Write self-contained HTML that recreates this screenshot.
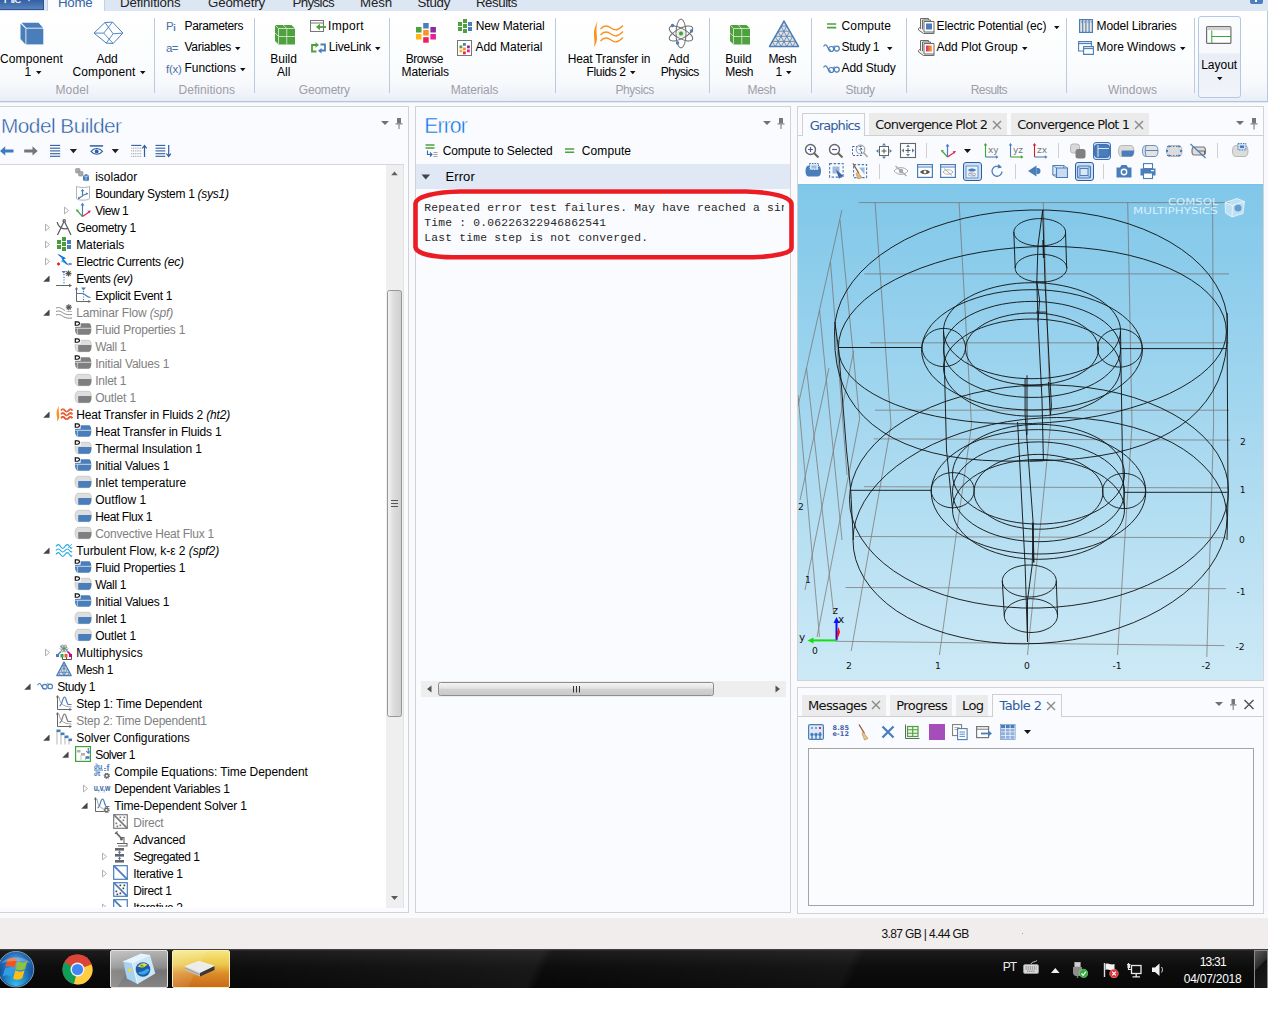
<!DOCTYPE html><html><head><meta charset="utf-8"><title>COMSOL Multiphysics</title><style>
html,body{margin:0;padding:0}
body{width:1280px;height:1024px;background:#fff;position:relative;overflow:hidden;font-family:"Liberation Sans",sans-serif;font-size:12px}
#app{position:absolute;left:0;top:0;width:1268px;height:988px;background:#f9fafd;overflow:hidden}
#app div,#app svg,#app span.t{position:absolute}
span.t{white-space:pre;display:block}
.pn{border:1px solid #d2d2d2;background:#fafbfe;box-sizing:border-box}
</style></head><body><div id="app">
<!-- sec_ribbon -->
<div style="left:0px;top:0px;width:1268px;height:11px;background:#dde7f4;"></div><div style="left:0px;top:0px;width:44px;height:10px;background:linear-gradient(#3360a5,#5a82bb);border-right:1px solid #2a5496;border-bottom:1px solid #2a5496;box-sizing:border-box;"></div><div style="left:47px;top:0px;width:58px;height:11px;background:#fcfdff;border-left:1px solid #c3d1e4;border-right:1px solid #c3d1e4;box-sizing:border-box;"></div><span class="t" style="top:-11.21px;font-size:13.3px;line-height:19px;color:#fff;letter-spacing:-1.108px;left:3.50px;">File</span><span class="t" style="top:-7.21px;font-size:13.3px;line-height:19px;color:#3563a8;letter-spacing:-0.244px;left:58.00px;">Home</span><span class="t" style="top:-7.21px;font-size:13.3px;line-height:19px;color:#222;letter-spacing:-0.136px;left:120.00px;">Definitions</span><span class="t" style="top:-7.21px;font-size:13.3px;line-height:19px;color:#222;letter-spacing:-0.174px;left:208.00px;">Geometry</span><span class="t" style="top:-7.21px;font-size:13.3px;line-height:19px;color:#222;letter-spacing:-0.618px;left:292.50px;">Physics</span><span class="t" style="top:-7.21px;font-size:13.3px;line-height:19px;color:#222;letter-spacing:-0.131px;left:360.00px;">Mesh</span><span class="t" style="top:-7.21px;font-size:13.3px;line-height:19px;color:#222;letter-spacing:-0.302px;left:417.50px;">Study</span><span class="t" style="top:-7.21px;font-size:13.3px;line-height:19px;color:#222;letter-spacing:-0.478px;left:476.00px;">Results</span><svg style="left:26.5px;top:-2px;" width="8" height="6" viewBox="0 0 8 6"><path d="M0 0h4l-2 3.500z" fill="#fff"/></svg><div style="left:1250px;top:0px;width:13px;height:3.8px;background:#4a80be;border-radius:0 0 2px 2px;"></div><div style="left:1255.2px;top:0px;width:1.8px;height:2px;background:#fff;"></div><div style="left:0px;top:11px;width:1267px;height:90px;background:linear-gradient(#ffffff 0%,#fcfdfe 50%,#f7f9fc 80%,#f0f3f9 92%,#e8edf6 100%);border-right:1px solid #b9c9dc;border-bottom:1px solid #b4c5da;box-sizing:content-box;"></div><div style="left:0px;top:102px;width:1268px;height:1px;background:#e4eaf3;"></div><div style="left:154.0px;top:18px;width:1px;height:75px;background:#bccadf;"></div><div style="left:254.0px;top:18px;width:1px;height:75px;background:#bccadf;"></div><div style="left:389.0px;top:18px;width:1px;height:75px;background:#bccadf;"></div><div style="left:555.0px;top:18px;width:1px;height:75px;background:#bccadf;"></div><div style="left:709.0px;top:18px;width:1px;height:75px;background:#bccadf;"></div><div style="left:811.0px;top:18px;width:1px;height:75px;background:#bccadf;"></div><div style="left:906.0px;top:18px;width:1px;height:75px;background:#bccadf;"></div><div style="left:1066.0px;top:18px;width:1px;height:75px;background:#bccadf;"></div><div style="left:1194.0px;top:18px;width:1px;height:75px;background:#bccadf;"></div><svg style="left:20px;top:22px;" width="24" height="23" viewBox="0 0 24 23"><path d="M.5 1.500L5.500 6.500V22.500L.5 17z" fill="#4a7ebb"/><path d="M1.500 .800h17l4.500 5H6.200z" fill="#4a7ebb"/><rect x="6.300" y="6.600" width="17" height="15.800" fill="#4a7ebb"/></svg><span class="t" style="top:50.94px;font-size:12px;line-height:17px;color:#000;letter-spacing:0.107px;left:0.00px;">Component</span><span class="t" style="top:64.04px;font-size:12px;line-height:17px;color:#000;left:24.50px;">1</span><svg style="left:35.5px;top:71px;" width="6" height="4" viewBox="0 0 6 4"><path d="M0 0h5.500l-2.750 3.300z" fill="#111"/></svg><svg style="left:93px;top:21px;" width="31" height="24" viewBox="0 0 31 24"><g stroke="#4a7ebb" stroke-width="1" fill="none" stroke-linejoin="round"><path d="M1 12.100L12 1.500 19.500 1.100 29.900 12.100 20.100 22.500 13.250 22.100z"/><path d="M1 12.100H10.750L19.500 1.100M10.750 12.100L20.100 22.500M29.900 12.100L20.100 12.750 12 1.500M20.100 12.750L13.250 22.100" stroke-width=".9"/></g></svg><span class="t" style="top:50.94px;font-size:12px;line-height:17px;color:#000;letter-spacing:-0.117px;left:96.50px;">Add</span><span class="t" style="top:64.04px;font-size:12px;line-height:17px;color:#000;letter-spacing:0.107px;left:72.50px;">Component</span><svg style="left:140px;top:71px;" width="6" height="4" viewBox="0 0 6 4"><path d="M0 0h5.500l-2.750 3.300z" fill="#111"/></svg><span class="t" style="top:81.84px;font-size:12px;line-height:17px;color:#9d9da8;letter-spacing:0.123px;left:55.50px;">Model</span><span class="t" style="top:18.02px;font-size:11.5px;line-height:16px;color:#4a6fa5;left:166.00px;">P</span><span class="t" style="top:21.68px;font-size:9px;line-height:13px;color:#4a6fa5;font-weight:bold;left:173.20px;">i</span><span class="t" style="top:17.84px;font-size:12px;line-height:17px;color:#000;letter-spacing:-0.332px;left:184.50px;">Parameters</span><span class="t" style="top:39.72px;font-size:11.5px;line-height:16px;color:#4a6fa5;letter-spacing:-0.556px;left:166.00px;">a=</span><span class="t" style="top:39.04px;font-size:12px;line-height:17px;color:#000;letter-spacing:-0.293px;left:184.50px;">Variables</span><svg style="left:235px;top:46.5px;" width="6" height="4" viewBox="0 0 6 4"><path d="M0 0h5.500l-2.750 3.300z" fill="#111"/></svg><span class="t" style="top:61.12px;font-size:11.5px;line-height:16px;color:#4a6fa5;letter-spacing:-0.276px;left:166.00px;">f(x)</span><span class="t" style="top:60.44px;font-size:12px;line-height:17px;color:#000;letter-spacing:-0.058px;left:184.50px;">Functions</span><svg style="left:240px;top:68px;" width="6" height="4" viewBox="0 0 6 4"><path d="M0 0h5.500l-2.750 3.300z" fill="#111"/></svg><span class="t" style="top:81.84px;font-size:12px;line-height:17px;color:#9d9da8;letter-spacing:0.043px;left:178.50px;">Definitions</span><svg style="left:274.5px;top:24.5px;" width="21" height="20" viewBox="0 0 21 20"><path d="M0 0H16.500L20 3.500V19.500H3.500L0 16z" fill="#4fa03f"/><path d="M3.500 3.500H20M3.500 3.500V19.500M3.500 3.500L0 0M3.500 11.500H20M11.750 3.500V19.500M11.750 3.500L8.250 0M0 8l3.500 3.500" stroke="#d3ebcc" stroke-width=".9" fill="none" opacity=".95"/></svg><span class="t" style="top:50.94px;font-size:12px;line-height:17px;color:#000;letter-spacing:-0.017px;left:270.30px;">Build</span><span class="t" style="top:64.04px;font-size:12px;line-height:17px;color:#000;letter-spacing:0.088px;left:277.00px;">All</span><svg style="left:310px;top:20px;" width="17" height="12" viewBox="0 0 17 12"><rect x=".5" y=".5" width="13" height="11" fill="#fff" stroke="#777"/><path d="M.5 3h13" stroke="#777"/><path d="M16 7H8.500" stroke="#4fa03f" stroke-width="1.800"/><path d="M6 7l4-3.200v6.400z" fill="#4fa03f"/></svg><span class="t" style="top:17.84px;font-size:12px;line-height:17px;color:#000;letter-spacing:0.332px;left:328.00px;">Import</span><svg style="left:310px;top:42px;" width="17" height="12" viewBox="0 0 17 12"><path d="M6 3H2v6.500h4.500" stroke="#4fa03f" stroke-width="1.800" fill="none"/><path d="M5.500 .2l3.500 2.800-3.500 2.800z" fill="#4fa03f"/><path d="M10.500 8.500H15V2.500h-4.500" stroke="#4a7ebb" stroke-width="1.800" fill="none"/><path d="M11.500 11.500L8 8.700l3.500-2.800z" fill="#4a7ebb"/></svg><span class="t" style="top:39.04px;font-size:12px;line-height:17px;color:#000;letter-spacing:-0.228px;left:328.80px;">LiveLink</span><svg style="left:375px;top:46.5px;" width="6" height="4" viewBox="0 0 6 4"><path d="M0 0h5.500l-2.750 3.300z" fill="#111"/></svg><span class="t" style="top:81.84px;font-size:12px;line-height:17px;color:#9d9da8;letter-spacing:-0.210px;left:298.80px;">Geometry</span><svg style="left:416px;top:23px;" width="21" height="21" viewBox="0 0 21 21"><rect x="7.2" y="0" width="5.5" height="5.5" fill="#4a7ebb"/><rect x="0" y="4" width="5.5" height="5.5" fill="#4fa03f"/><rect x="14.4" y="4" width="5.5" height="5.5" fill="#8b2a9b"/><rect x="7.2" y="7" width="5.5" height="5.5" fill="#f7931e"/><rect x="0" y="11" width="5.5" height="5.5" fill="#fdb813"/><rect x="14.4" y="11" width="5.5" height="5.5" fill="#e91e9c"/><rect x="7.2" y="14.2" width="5.5" height="5.5" fill="#ec1f5b"/></svg><span class="t" style="top:50.94px;font-size:12px;line-height:17px;color:#000;letter-spacing:-0.436px;left:405.70px;">Browse</span><span class="t" style="top:64.04px;font-size:12px;line-height:17px;color:#000;letter-spacing:-0.164px;left:401.60px;">Materials</span><svg style="left:458px;top:19px;" width="14" height="14" viewBox="0 0 14 14"><rect x="0" y="3" width="4" height="4" fill="#4fa03f"/><rect x="0" y="8" width="4" height="4" fill="#4fa03f"/><rect x="5" y="0" width="4" height="4" fill="#4fa03f"/><rect x="5" y="5" width="4" height="4" fill="#4fa03f"/><rect x="5" y="10" width="4" height="4" fill="#4fa03f"/><rect x="10" y="3" width="4" height="4" fill="#4a7ebb"/><rect x="10" y="8" width="4" height="4" fill="#4a7ebb"/></svg><span class="t" style="top:17.84px;font-size:12px;line-height:17px;color:#000;letter-spacing:-0.085px;left:475.70px;">New Material</span><svg style="left:457px;top:40px;" width="15" height="16" viewBox="0 0 15 16"><rect x=".5" y=".5" width="14" height="15" fill="#fff" stroke="#777"/><rect x="6" y="3" width="2.800" height="2.800" fill="#4a7ebb"/><rect x="2.5" y="5.5" width="2.800" height="2.800" fill="#4fa03f"/><rect x="10" y="5.5" width="2.800" height="2.800" fill="#8b2a9b"/><rect x="6" y="7.5" width="2.800" height="2.800" fill="#f7931e"/><rect x="2.5" y="9.5" width="2.800" height="2.800" fill="#fdb813"/><rect x="10" y="9.5" width="2.800" height="2.800" fill="#e91e9c"/><rect x="6" y="11.5" width="2.800" height="2.800" fill="#ec1f5b"/></svg><span class="t" style="top:39.04px;font-size:12px;line-height:17px;color:#000;letter-spacing:-0.030px;left:475.50px;">Add Material</span><span class="t" style="top:81.84px;font-size:12px;line-height:17px;color:#9d9da8;letter-spacing:-0.153px;left:450.70px;">Materials</span><svg style="left:593px;top:21px;" width="32" height="27" viewBox="0 0 32 27"><path d="M4.500 0C2.500 5 .5 9 1 14.500c.3 4 1 7.500-.2 11.500 2.800-3 3.600-7.500 3-11.500C3.300 10 3.300 5 4.500 0z" fill="#f7931e"/><g stroke="#f7931e" stroke-width="1.300" fill="none"><path d="M7.500 8c3.500-4 6.500-4 10.500-1s7 2.500 12-2.500"/><path d="M7.500 14c3.500-4 6.500-4 10.500-1s7 2.500 12-2.500"/><path d="M7.500 20c3.500-4 6.500-4 10.500-1s7 2.500 12-2.500"/></g></svg><span class="t" style="top:50.94px;font-size:12px;line-height:17px;color:#000;letter-spacing:-0.179px;left:567.80px;">Heat Transfer in</span><span class="t" style="top:64.04px;font-size:12px;line-height:17px;color:#000;letter-spacing:-0.377px;left:586.60px;">Fluids 2</span><svg style="left:630px;top:71px;" width="6" height="4" viewBox="0 0 6 4"><path d="M0 0h5.500l-2.750 3.300z" fill="#111"/></svg><svg style="left:667px;top:18px;" width="28" height="31" viewBox="0 0 28 31"><g stroke="#6a6a6a" stroke-width="1" fill="none"><ellipse cx="14" cy="15.500" rx="13" ry="5" transform="rotate(28 14 15.500)"/><ellipse cx="14" cy="15.500" rx="13" ry="5" transform="rotate(-28 14 15.500)"/><ellipse cx="14" cy="15.500" rx="5" ry="14.500"/></g><circle cx="14" cy="15.500" r="3.600" fill="#e4e4e4"/><circle cx="14" cy="15.500" r="2" fill="#3aa635"/><circle cx="5.500" cy="7.500" r="1.700" fill="#4a7ebb"/><circle cx="24.500" cy="13" r="1.700" fill="#4a7ebb"/><circle cx="10.500" cy="25" r="1.700" fill="#4a7ebb"/></svg><span class="t" style="top:50.94px;font-size:12px;line-height:17px;color:#000;letter-spacing:-0.117px;left:668.20px;">Add</span><span class="t" style="top:64.04px;font-size:12px;line-height:17px;color:#000;letter-spacing:-0.478px;left:660.70px;">Physics</span><span class="t" style="top:81.84px;font-size:12px;line-height:17px;color:#9d9da8;letter-spacing:-0.435px;left:615.50px;">Physics</span><svg style="left:729.5px;top:24.5px;" width="21" height="20" viewBox="0 0 21 20"><path d="M0 0H16.500L20 3.500V19.500H3.500L0 16z" fill="#4fa03f"/><path d="M3.500 3.500H20M3.500 3.500V19.500M3.500 3.500L0 0M3.500 11.500H20M11.750 3.500V19.500M11.750 3.500L8.250 0M0 8l3.500 3.500" stroke="#d3ebcc" stroke-width=".9" fill="none" opacity=".95"/></svg><span class="t" style="top:50.94px;font-size:12px;line-height:17px;color:#000;letter-spacing:-0.077px;left:725.30px;">Build</span><span class="t" style="top:64.04px;font-size:12px;line-height:17px;color:#000;letter-spacing:-0.386px;left:725.30px;">Mesh</span><svg style="left:768px;top:20px;" width="32" height="27.5" viewBox="0 0 30 27"><path d="M15 1L.800 26h28.400z" fill="#e6e1da" stroke="#4a7ebb" stroke-width="1.500" stroke-linejoin="round"/><g stroke="#4a7ebb" stroke-width=".8" fill="none"><path d="M12.2 6.0h5.7"/><path d="M9.3 11.0h11.4"/><path d="M6.5 16.0h17.0"/><path d="M3.6 21.0h22.7"/><path d="M6.5 26L17.8 6.0"/><path d="M6.5 26L3.2 21.0"/><path d="M12.2 26L20.7 11.0"/><path d="M12.2 26L6.1 16.0"/><path d="M17.8 26L23.5 16.0"/><path d="M17.8 26L8.9 11.0"/><path d="M23.5 26L26.4 21.0"/><path d="M23.5 26L11.8 6.0"/></g></svg><span class="t" style="top:50.94px;font-size:12px;line-height:17px;color:#000;letter-spacing:-0.386px;left:768.50px;">Mesh</span><span class="t" style="top:64.04px;font-size:12px;line-height:17px;color:#000;left:775.50px;">1</span><svg style="left:786px;top:71px;" width="6" height="4" viewBox="0 0 6 4"><path d="M0 0h5.500l-2.750 3.300z" fill="#111"/></svg><span class="t" style="top:81.84px;font-size:12px;line-height:17px;color:#9d9da8;letter-spacing:-0.336px;left:747.50px;">Mesh</span><svg style="left:827px;top:23px;" width="10" height="6" viewBox="0 0 10 6"><path d="M0 1h9.200M0 4.700h9.200" stroke="#4fa03f" stroke-width="1.700"/></svg><span class="t" style="top:17.84px;font-size:12px;line-height:17px;color:#000;letter-spacing:0.101px;left:841.60px;">Compute</span><svg style="left:822.5px;top:43.5px;" width="17" height="9" viewBox="0 0 17 9"><g stroke="#4a7ebb" stroke-width="1.200" fill="none"><path d="M.5 2.500c1.500-2.500 3-2 4 .500s2 3.500 3.500 3"/><circle cx="8.200" cy="5" r="2.500"/><circle cx="13.800" cy="4.600" r="2.500"/><path d="M10 3c.8-1.600 1.600-1.600 2.400 0" stroke-width=".9"/></g></svg><span class="t" style="top:39.04px;font-size:12px;line-height:17px;color:#000;letter-spacing:-0.471px;left:841.60px;">Study 1</span><svg style="left:887px;top:46.5px;" width="6" height="4" viewBox="0 0 6 4"><path d="M0 0h5.500l-2.750 3.300z" fill="#111"/></svg><svg style="left:822.5px;top:65px;" width="17" height="9" viewBox="0 0 17 9"><g stroke="#4a7ebb" stroke-width="1.200" fill="none"><path d="M.5 2.500c1.500-2.500 3-2 4 .500s2 3.500 3.500 3"/><circle cx="8.200" cy="5" r="2.500"/><circle cx="13.800" cy="4.600" r="2.500"/><path d="M10 3c.8-1.600 1.600-1.600 2.400 0" stroke-width=".9"/></g></svg><span class="t" style="top:60.44px;font-size:12px;line-height:17px;color:#000;letter-spacing:-0.152px;left:841.60px;">Add Study</span><span class="t" style="top:81.84px;font-size:12px;line-height:17px;color:#9d9da8;letter-spacing:-0.277px;left:845.50px;">Study</span><svg style="left:918px;top:17.5px;" width="17" height="16" viewBox="0 0 17 16"><g fill="#f2f2f2" stroke="#6a6a6a" stroke-width="1"><path d="M2.500 .5h8v11h-8z"/><path d="M4.500 2h8v11h-8z"/><path d="M.5 10.500l2-1.500M.5 10.500v1.500l5 3.500h10.500v-2"/><path d="M6 3.500h10v10.500H6z" fill="#fff"/></g><rect x="8" y="5.500" width="6" height="6" fill="#4a7ebb"/></svg><span class="t" style="top:17.84px;font-size:12px;line-height:17px;color:#000;letter-spacing:-0.160px;left:936.60px;">Electric Potential (ec)</span><svg style="left:1054px;top:25.5px;" width="6" height="4" viewBox="0 0 6 4"><path d="M0 0h5.500l-2.750 3.300z" fill="#111"/></svg><svg style="left:918px;top:39.5px;" width="17" height="16" viewBox="0 0 17 16"><g fill="#f2f2f2" stroke="#6a6a6a" stroke-width="1"><path d="M2.500 .5h8v11h-8z"/><path d="M4.500 2h8v11h-8z"/><path d="M.5 10.500l2-1.500M.5 10.500v1.500l5 3.500h10.500v-2"/><path d="M6 3.500h10v10.500H6z" fill="#fff"/></g><defs><linearGradient id="pg" x1="0" x2="1"><stop offset="0" stop-color="#e0245e"/><stop offset="1" stop-color="#fbb03b"/></linearGradient></defs><rect x="8" y="5.500" width="6" height="6" fill="url(#pg)"/></svg><span class="t" style="top:39.04px;font-size:12px;line-height:17px;color:#000;letter-spacing:-0.075px;left:936.60px;">Add Plot Group</span><svg style="left:1022px;top:46.5px;" width="6" height="4" viewBox="0 0 6 4"><path d="M0 0h5.500l-2.750 3.300z" fill="#111"/></svg><span class="t" style="top:81.84px;font-size:12px;line-height:17px;color:#9d9da8;letter-spacing:-0.545px;left:970.70px;">Results</span><svg style="left:1078.5px;top:19px;" width="14" height="14" viewBox="0 0 14 14"><rect x=".6" y=".6" width="12.800" height="12.800" fill="#e9e4dc" stroke="#4a7ebb" stroke-width="1.200"/><path d="M3.700 .6v12.800M6.900 .6v12.800M10.100 .6v12.800" stroke="#4a7ebb" stroke-width="1.100"/><path d="M2 3h1.200M5.200 3h1.200M8.400 3h1.200M11.600 3h1.200" stroke="#4a7ebb" stroke-width="1"/></svg><span class="t" style="top:17.84px;font-size:12px;line-height:17px;color:#000;letter-spacing:-0.136px;left:1096.60px;">Model Libraries</span><svg style="left:1078px;top:41px;" width="16" height="14" viewBox="0 0 16 14"><g fill="#fff" stroke="#4a7ebb" stroke-width="1.100"><path d="M.6 .6h12.800v9.400H.6z"/><path d="M.6 2.600h12.800" /><path d="M5.600 5.600h9.800v7.800H5.600z"/><path d="M5.600 7.600h9.800"/></g></svg><span class="t" style="top:39.04px;font-size:12px;line-height:17px;color:#000;letter-spacing:-0.029px;left:1096.60px;">More Windows</span><svg style="left:1180px;top:46.5px;" width="6" height="4" viewBox="0 0 6 4"><path d="M0 0h5.500l-2.750 3.300z" fill="#111"/></svg><span class="t" style="top:81.84px;font-size:12px;line-height:17px;color:#9d9da8;letter-spacing:0.046px;left:1108.00px;">Windows</span><div style="left:1197.5px;top:15.5px;width:43px;height:82px;border:1px solid #b4c8e4;border-radius:3px;box-sizing:border-box;background:linear-gradient(#fbfcfe 0%,#f6f8fc 45%,#e9eef6 46%,#f1f4fa 100%);"></div><svg style="left:1206px;top:26px;" width="26" height="18" viewBox="0 0 26 18"><rect x=".6" y=".6" width="24.300" height="16.800" rx="1" fill="#fff" stroke="#6d6d6d" stroke-width="1.200"/><rect x="1.200" y="1.200" width="23" height="3" fill="#d0d0d0"/><path d="M5.800 4.500v12.500M5.800 10.500h19" stroke="#3aa635" stroke-width="1"/></svg><span class="t" style="top:56.94px;font-size:12px;line-height:17px;color:#000;letter-spacing:-0.005px;left:1201.20px;">Layout</span><svg style="left:1216.8px;top:77px;" width="6" height="4" viewBox="0 0 6 4"><path d="M0 0h5.500l-2.750 3.300z" fill="#111"/></svg>
<!-- sec_tree -->
<div class="pn" style="left:-1px;top:106px;width:410px;height:807px;"></div><span class="t" style="top:111.29px;font-size:20.8px;line-height:29px;color:#1b54a0;letter-spacing:-0.514px;left:1.00px;-webkit-text-stroke:.45px #fafbfe;">Model Builder</span><svg style="left:381px;top:117px;" width="22" height="14" viewBox="0 0 22 14"><path d="M0 4h8l-4 4z" fill="#6c7078"/><path d="M16 1h4v5.500h-4z" fill="#777"/><path d="M14.500 6.800h7M18 7v5" stroke="#888" stroke-width="1.200"/></svg><svg style="left:0px;top:142px;" width="180" height="18" viewBox="0 0 180 18"><path d="M0 8.900l5.200-4.600v3.100h8.300v3h-8.300v3.100z" fill="#3f7abf"/><path d="M37.700 8.900l-5.200-4.600v3.100h-8.300v3h8.300v3.100z" fill="#757575"/><path d="M50 3.4h10.200" stroke="#2f5f9f" stroke-width="1.100"/><path d="M50 6.2h10.200" stroke="#2f5f9f" stroke-width="1.100"/><path d="M50 8.9h10.200" stroke="#2f5f9f" stroke-width="1.100"/><path d="M50 11.7h10.200" stroke="#2f5f9f" stroke-width="1.100"/><path d="M50 14.3h10.200" stroke="#2f5f9f" stroke-width="1.100"/><path d="M69.800 7h7.200l-3.600 4.300z" fill="#222"/><path d="M89.800 3.900h13.300" stroke="#2f5f9f" stroke-width="1.500"/><path d="M91 9.400c3-3.800 8.500-3.800 11.500 0-3 3.800-8.500 3.800-11.500 0z" fill="none" stroke="#2f5f9f" stroke-width="1.100"/><circle cx="96.700" cy="9.400" r="1.900" fill="#2f5f9f"/><path d="M111.700 7h7.200l-3.600 4.300z" fill="#222"/><path d="M131.200 3.400h10.200" stroke="#2f5f9f" stroke-width="1.100"/><path d="M131.200 6.2h10.200" stroke="#999" stroke-width="1" stroke-dasharray="1 .8"/><path d="M131.200 8.9h10.200" stroke="#999" stroke-width="1" stroke-dasharray="1 .8"/><path d="M131.200 11.7h10.200" stroke="#999" stroke-width="1" stroke-dasharray="1 .8"/><path d="M131.200 14.3h10.200" stroke="#999" stroke-width="1" stroke-dasharray="1 .8"/><path d="M144.500 15V4M142.300 6.300l2.200-2.800 2.200 2.800" stroke="#2f5f9f" stroke-width="1.200" fill="none"/><path d="M155.500 3.4h9.800" stroke="#2f5f9f" stroke-width="1.100"/><path d="M155.500 6.2h9.800" stroke="#2f5f9f" stroke-width="1.100"/><path d="M155.500 8.9h9.800" stroke="#2f5f9f" stroke-width="1.100"/><path d="M155.500 11.7h9.800" stroke="#2f5f9f" stroke-width="1.100"/><path d="M155.500 14.3h9.800" stroke="#2f5f9f" stroke-width="1.100"/><path d="M168.700 3v11M166.500 11.700l2.200 2.800 2.200-2.800" stroke="#2f5f9f" stroke-width="1.200" fill="none"/></svg><div style="left:0px;top:164px;width:404px;height:1px;background:#d5d8df;"></div><div style="left:0px;top:165px;width:386px;height:743px;background:#fff;"></div><div style="left:0;top:166px;width:386px;height:741px;overflow:hidden"><svg style="left:75px;top:2px;overflow:visible;" width="16" height="16" viewBox="0 0 16 16"><g fill="#a9a9a9" stroke="#8c8c8c" stroke-width=".6"><rect x=".5" y=".5" width="4.500" height="4.500" rx="1"/><rect x="3.500" y="3.500" width="4.500" height="4.500" rx="1"/></g><path d="M8 7.500l3-1.500 3 1.200v5.300l-3 .8-3-1z" fill="#4a7ebb"/><path d="M8 7.500l3 1 3-.8M11 8.500v4.800" stroke="#dbe6f3" stroke-width=".7" fill="none"/></svg><span class="t" style="top:2.64px;font-size:12px;line-height:17px;color:#000;letter-spacing:-0.003px;left:95.20px;">isolador</span><svg style="left:75px;top:19px;overflow:visible;" width="16" height="16" viewBox="0 0 16 16"><path d="M1.500 1.200c2 1.700 11 1.700 13 0v12.600c-2 1.800-11 1.800-13 0z" fill="#fff" stroke="#b4b4b4" stroke-width="1"/><g stroke="#4a7ebb" stroke-width="1.200" fill="none"><path d="M7.500 5.500v5.500l-4 2.500M7.500 10.500l4.500-1.700"/></g><path d="M7.500 3.800l-1.800 2.400h3.600zM13.500 8.200l-2.800-.6 1 2.400zM2.800 14.200l.8-2.600 1.600 2z" fill="#4a7ebb"/></svg><span class="t" style="top:19.64px;font-size:12px;line-height:17px;color:#000;letter-spacing:-0.316px;left:95.20px;">Boundary System 1</span><span class="t" style="top:19.64px;font-size:12px;line-height:17px;color:#000;font-style:italic;letter-spacing:-0.264px;left:194.55px;"> (sys1)</span><svg style="left:63px;top:39.5px;" width="7" height="10" viewBox="0 0 7 10"><path d="M1.500 1.100l4 3.400-4 3.400z" fill="#fff" stroke="#b0b0b0" stroke-width="1"/></svg><svg style="left:75px;top:36px;overflow:visible;" width="16" height="16" viewBox="0 0 16 16"><path d="M7.500 14.500V2.500" stroke="#4a7ebb" stroke-width="1.200"/><path d="M7.500 .8l-2 2.800h4z" fill="#4a7ebb"/><path d="M7.500 14.500l-5-5.500" stroke="#4aa53c" stroke-width="1.200"/><path d="M.8 7.300l3.200.6-2.200 2.200z" fill="#4aa53c"/><path d="M7.500 14.500l7-4.800" stroke="#e0245e" stroke-width="1.200"/><path d="M16 8.400l-3.300.4 1.700 2.500z" fill="#e0245e"/></svg><span class="t" style="top:36.64px;font-size:12px;line-height:17px;color:#000;letter-spacing:-0.467px;left:95.20px;">View 1</span><svg style="left:44px;top:56.5px;" width="7" height="10" viewBox="0 0 7 10"><path d="M1.500 1.100l4 3.400-4 3.400z" fill="#fff" stroke="#b0b0b0" stroke-width="1"/></svg><svg style="left:56px;top:53px;overflow:visible;" width="16" height="16" viewBox="0 0 16 16"><g stroke="#5a5a5a" stroke-width="1.200" fill="none"><path d="M8 2.500L1.500 16M8.500 2.500L15 16"/><circle cx="8.200" cy="1.800" r="1.200" fill="#fff"/><path d="M1.200 3c.8 5 5.500 8 11 6.300"/></g></svg><span class="t" style="top:53.64px;font-size:12px;line-height:17px;color:#000;letter-spacing:-0.299px;left:76.20px;">Geometry 1</span><svg style="left:44px;top:73.5px;" width="7" height="10" viewBox="0 0 7 10"><path d="M1.500 1.100l4 3.400-4 3.400z" fill="#fff" stroke="#b0b0b0" stroke-width="1"/></svg><svg style="left:56px;top:70px;overflow:visible;" width="16" height="16" viewBox="0 0 16 16"><rect x="1" y="4" width="4" height="4" fill="#4a9c38"/><rect x="1" y="9" width="4" height="4" fill="#4a9c38"/><rect x="6" y="1" width="4" height="4" fill="#4a9c38"/><rect x="6" y="6" width="4" height="4" fill="#4a9c38"/><rect x="6" y="11" width="4" height="4" fill="#4a9c38"/><rect x="11" y="4" width="4" height="4" fill="#4a7ebb"/><rect x="11" y="9" width="4" height="4" fill="#4a7ebb"/></svg><span class="t" style="top:70.64px;font-size:12px;line-height:17px;color:#000;letter-spacing:-0.076px;left:76.20px;">Materials</span><svg style="left:44px;top:90.5px;" width="7" height="10" viewBox="0 0 7 10"><path d="M1.500 1.100l4 3.400-4 3.400z" fill="#fff" stroke="#b0b0b0" stroke-width="1"/></svg><svg style="left:56px;top:87px;overflow:visible;" width="16" height="16" viewBox="0 0 16 16"><path d="M1 .5l9 5-2.500.800 6 6.700-9-5 2.500-.900z" fill="#1fb6ee"/><path d="M2.500 1.600l6 3.600-2 .700 5 5.600" stroke="#2a5fd0" stroke-width="1.100" fill="none"/><path d="M1 11h3M2.500 9.500v3" stroke="#e11" stroke-width="1.300"/><path d="M12.500 11h3.200" stroke="#2244dd" stroke-width="1.300"/></svg><span class="t" style="top:87.64px;font-size:12px;line-height:17px;color:#000;letter-spacing:-0.236px;left:76.20px;">Electric Currents</span><span class="t" style="top:87.64px;font-size:12px;line-height:17px;color:#000;font-style:italic;letter-spacing:-0.217px;left:160.88px;"> (ec)</span><svg style="left:42.5px;top:109px;" width="8" height="8" viewBox="0 0 8 8"><path d="M6.300 .9v5.600H.7z" fill="#454545" stroke="#3a3a3a" stroke-width=".4"/></svg><svg style="left:56px;top:104px;overflow:visible;" width="16" height="16" viewBox="0 0 16 16"><path d="M0 15.500h14" stroke="#666" stroke-width="1"/><path d="M16 15.500l-3-1.800v3.600z" fill="#666"/><path d="M8 4v10" stroke="#4a7ebb" stroke-width="1.200" stroke-dasharray="1.200 1.500"/><path d="M5.500 1h4.500l-2.250 2.600z" fill="#4a7ebb"/><path d="M9.50 3.50L15.50 3.50" stroke="#555" stroke-width="1.200"/><path d="M12.50 0.50L12.50 6.50" stroke="#555" stroke-width="1.200"/><path d="M10.40 1.40L14.60 5.60" stroke="#555" stroke-width="1.200"/><path d="M10.40 5.60L14.60 1.40" stroke="#555" stroke-width="1.200"/></svg><span class="t" style="top:104.64px;font-size:12px;line-height:17px;color:#000;letter-spacing:-0.432px;left:76.20px;">Events</span><span class="t" style="top:104.64px;font-size:12px;line-height:17px;color:#000;font-style:italic;letter-spacing:-0.339px;left:110.29px;"> (ev)</span><svg style="left:75px;top:121px;overflow:visible;" width="16" height="16" viewBox="0 0 16 16"><path d="M1.500 1.500v13h13" stroke="#666" stroke-width="1" fill="none"/><path d="M1.500 0l-1.600 2.600h3.200zM16 14.500l-2.600-1.600v3.200z" fill="#666"/><path d="M1.500 6.500h6c3 0 3.500 4 8 4" stroke="#4a7ebb" stroke-width="1.200" fill="none"/><path d="M8.500 4v10" stroke="#4a7ebb" stroke-width="1.200" stroke-dasharray="1.200 1.500"/><path d="M6 .6h5l-2.500 2.800z" fill="#4a7ebb"/></svg><span class="t" style="top:121.64px;font-size:12px;line-height:17px;color:#000;letter-spacing:-0.327px;left:95.20px;">Explicit Event 1</span><svg style="left:42.5px;top:143px;" width="8" height="8" viewBox="0 0 8 8"><path d="M6.300 .9v5.600H.7z" fill="#454545" stroke="#3a3a3a" stroke-width=".4"/></svg><svg style="left:56px;top:138px;overflow:visible;" width="16" height="16" viewBox="0 0 16 16"><g stroke="#8a8a8a" stroke-width="1" fill="none"><path d="M0 4c4-1.500 6 1 8 2s5 1.500 8 1"/><path d="M0 7.500c4-1.500 6 1 8 2s5 1.500 8 1"/><path d="M0 11c4-1.500 6 1 8 2s5 1.500 8 1"/></g><rect x="9" y="0" width="7" height="7" fill="#fbfcfe"/><path d="M9.80 3.20L15.80 3.20" stroke="#555" stroke-width="1.200"/><path d="M12.80 0.20L12.80 6.20" stroke="#555" stroke-width="1.200"/><path d="M10.70 1.10L14.90 5.30" stroke="#555" stroke-width="1.200"/><path d="M10.70 5.30L14.90 1.10" stroke="#555" stroke-width="1.200"/></svg><span class="t" style="top:138.64px;font-size:12px;line-height:17px;color:#808080;letter-spacing:-0.142px;left:76.20px;">Laminar Flow</span><span class="t" style="top:138.64px;font-size:12px;line-height:17px;color:#808080;font-style:italic;letter-spacing:-0.108px;left:146.51px;"> (spf)</span><svg style="left:75px;top:155px;overflow:visible;" width="16" height="16" viewBox="0 0 16 16"><g transform="translate(0 0) scale(1.02 1)"><path d="M3.2 2.3h10.3c1.8 0 2.5 2.5 2.5 5.7s-.7 5.7-2.5 5.7H3.2C1.2 13.7 0 11.200 0 8s1.200-5.700 3.200-5.700z" fill="#7f7f7f"/><path d="M0.300 7.300H16" stroke="#e4e9f0" stroke-width="1" opacity=".85"/><path d="M2.600 7.800c-.3 2-.6 4-.2 5.600" stroke="#dfe6ee" stroke-width=".9" fill="none" opacity=".8"/><rect x="-0.8" y="-0.500" width="6.300" height="6.300" fill="#fff"/><path d="M.3 .8h2.200c1.200 0 1.900.7 1.900 1.700s-.7 1.700-1.900 1.700H.3z" fill="none" stroke="#111" stroke-width="1.150"/></g></svg><span class="t" style="top:155.64px;font-size:12px;line-height:17px;color:#808080;letter-spacing:-0.225px;left:95.20px;">Fluid Properties 1</span><svg style="left:75px;top:172px;overflow:visible;" width="16" height="16" viewBox="0 0 16 16"><g transform="translate(0 0) scale(1.02 1)"><path d="M3.200 2.300h10.300c1.800 0 2.500 2.500 2.500 5.700s-.7 5.700-2.500 5.700H3.200C1.200 13.700 0 11.200 0 8s1.200-5.700 3.200-5.700z" fill="#dedede" stroke="#b9b9b9" stroke-width=".6"/><path d="M3.300 6.900H16c0 0 0 .6 0 1.100 0 3.200-.7 5.700-2.500 5.700H3.400C3 12 2.900 9 3.300 6.900z" fill="#7f7f7f"/><rect x="-0.8" y="-0.500" width="6.300" height="6.300" fill="#fff"/><path d="M.3 .8h2.200c1.200 0 1.900.7 1.900 1.700s-.7 1.700-1.900 1.700H.3z" fill="none" stroke="#111" stroke-width="1.150"/></g></svg><span class="t" style="top:172.64px;font-size:12px;line-height:17px;color:#808080;letter-spacing:-0.316px;left:95.20px;">Wall 1</span><svg style="left:75px;top:189px;overflow:visible;" width="16" height="16" viewBox="0 0 16 16"><g transform="translate(0 0) scale(1.02 1)"><path d="M3.2 2.3h10.3c1.8 0 2.5 2.5 2.5 5.7s-.7 5.7-2.5 5.7H3.2C1.2 13.7 0 11.200 0 8s1.200-5.700 3.200-5.700z" fill="#7f7f7f"/><path d="M0.300 7.300H16" stroke="#e4e9f0" stroke-width="1" opacity=".85"/><path d="M2.600 7.800c-.3 2-.6 4-.2 5.600" stroke="#dfe6ee" stroke-width=".9" fill="none" opacity=".8"/><rect x="-0.8" y="-0.500" width="6.300" height="6.300" fill="#fff"/><path d="M.3 .8h2.200c1.200 0 1.900.7 1.900 1.700s-.7 1.700-1.900 1.700H.3z" fill="none" stroke="#111" stroke-width="1.150"/></g></svg><span class="t" style="top:189.64px;font-size:12px;line-height:17px;color:#808080;letter-spacing:-0.197px;left:95.20px;">Initial Values 1</span><svg style="left:75px;top:206px;overflow:visible;" width="16" height="16" viewBox="0 0 16 16"><g transform="translate(0 0) scale(1.02 1)"><path d="M3.200 2.300h10.300c1.800 0 2.500 2.500 2.500 5.700s-.7 5.700-2.500 5.700H3.200C1.200 13.700 0 11.200 0 8s1.200-5.700 3.200-5.700z" fill="#dedede" stroke="#b9b9b9" stroke-width=".6"/><path d="M3.300 6.900H16c0 0 0 .6 0 1.100 0 3.200-.7 5.700-2.500 5.700H3.400C3 12 2.900 9 3.300 6.900z" fill="#7f7f7f"/></g></svg><span class="t" style="top:206.64px;font-size:12px;line-height:17px;color:#808080;letter-spacing:-0.241px;left:95.20px;">Inlet 1</span><svg style="left:75px;top:223px;overflow:visible;" width="16" height="16" viewBox="0 0 16 16"><g transform="translate(0 0) scale(1.02 1)"><path d="M3.200 2.300h10.300c1.800 0 2.500 2.500 2.500 5.700s-.7 5.700-2.500 5.700H3.200C1.200 13.700 0 11.200 0 8s1.200-5.700 3.200-5.700z" fill="#dedede" stroke="#b9b9b9" stroke-width=".6"/><path d="M3.300 6.900H16c0 0 0 .6 0 1.100 0 3.200-.7 5.700-2.500 5.700H3.400C3 12 2.900 9 3.300 6.900z" fill="#7f7f7f"/></g></svg><span class="t" style="top:223.64px;font-size:12px;line-height:17px;color:#808080;letter-spacing:-0.165px;left:95.20px;">Outlet 1</span><svg style="left:42.5px;top:245px;" width="8" height="8" viewBox="0 0 8 8"><path d="M6.300 .9v5.600H.7z" fill="#454545" stroke="#3a3a3a" stroke-width=".4"/></svg><svg style="left:56px;top:240px;overflow:visible;" width="16" height="16" viewBox="0 0 16 16"><path d="M3 0c-1.500 3-2.800 5-2.400 8.500.3 2.500 1 4.500.4 7 2-2 2.600-4.600 2.200-7C2.800 6 2.400 3.500 3 0z" fill="#f7931e"/><g stroke="#dd1c1c" stroke-width="1.600" fill="none"><path d="M5 4.500c1.400-1.600 2.400-1.600 3.800 0s2.400 1.600 3.800 0 2.400-1.600 3.800 0"/><path d="M5 8.300c1.400-1.600 2.400-1.600 3.800 0s2.400 1.600 3.800 0 2.400-1.600 3.800 0"/><path d="M5 12.100c1.400-1.600 2.400-1.600 3.800 0s2.400 1.600 3.800 0 2.400-1.600 3.800 0"/></g><g stroke="#ffcf3a" stroke-width=".6" fill="none"><path d="M5 4.500c1.400-1.600 2.400-1.600 3.800 0s2.400 1.600 3.800 0 2.400-1.600 3.800 0"/><path d="M5 8.300c1.400-1.600 2.400-1.600 3.800 0s2.400 1.600 3.800 0 2.400-1.600 3.800 0"/><path d="M5 12.100c1.400-1.600 2.400-1.600 3.800 0s2.400 1.600 3.800 0 2.400-1.600 3.800 0"/></g></svg><span class="t" style="top:240.64px;font-size:12px;line-height:17px;color:#000;letter-spacing:-0.156px;left:76.20px;">Heat Transfer in Fluids 2</span><span class="t" style="top:240.64px;font-size:12px;line-height:17px;color:#000;font-style:italic;letter-spacing:-0.139px;left:203.03px;"> (ht2)</span><svg style="left:75px;top:257px;overflow:visible;" width="16" height="16" viewBox="0 0 16 16"><g transform="translate(0 0) scale(1.02 1)"><path d="M3.2 2.3h10.3c1.8 0 2.5 2.5 2.5 5.7s-.7 5.7-2.5 5.7H3.2C1.2 13.7 0 11.200 0 8s1.200-5.700 3.200-5.700z" fill="#4a7ebb"/><path d="M0.300 7.300H16" stroke="#e4e9f0" stroke-width="1" opacity=".85"/><path d="M2.600 7.800c-.3 2-.6 4-.2 5.600" stroke="#dfe6ee" stroke-width=".9" fill="none" opacity=".8"/><rect x="-0.8" y="-0.500" width="6.300" height="6.300" fill="#fff"/><path d="M.3 .8h2.200c1.200 0 1.900.7 1.900 1.700s-.7 1.700-1.900 1.700H.3z" fill="none" stroke="#111" stroke-width="1.150"/></g></svg><span class="t" style="top:257.64px;font-size:12px;line-height:17px;color:#000;letter-spacing:-0.177px;left:95.20px;">Heat Transfer in Fluids 1</span><svg style="left:75px;top:274px;overflow:visible;" width="16" height="16" viewBox="0 0 16 16"><g transform="translate(0 0) scale(1.02 1)"><path d="M3.200 2.300h10.300c1.800 0 2.500 2.500 2.500 5.700s-.7 5.700-2.500 5.700H3.200C1.200 13.700 0 11.200 0 8s1.200-5.700 3.200-5.700z" fill="#dedede" stroke="#b9b9b9" stroke-width=".6"/><path d="M3.300 6.900H16c0 0 0 .6 0 1.100 0 3.200-.7 5.700-2.500 5.700H3.400C3 12 2.900 9 3.300 6.900z" fill="#4a7ebb"/><rect x="-0.8" y="-0.500" width="6.300" height="6.300" fill="#fff"/><path d="M.3 .8h2.200c1.200 0 1.900.7 1.900 1.700s-.7 1.700-1.900 1.700H.3z" fill="none" stroke="#111" stroke-width="1.150"/></g></svg><span class="t" style="top:274.64px;font-size:12px;line-height:17px;color:#000;letter-spacing:-0.106px;left:95.20px;">Thermal Insulation 1</span><svg style="left:75px;top:291px;overflow:visible;" width="16" height="16" viewBox="0 0 16 16"><g transform="translate(0 0) scale(1.02 1)"><path d="M3.2 2.3h10.3c1.8 0 2.5 2.5 2.5 5.7s-.7 5.7-2.5 5.7H3.2C1.2 13.7 0 11.200 0 8s1.200-5.700 3.200-5.700z" fill="#4a7ebb"/><path d="M0.300 7.300H16" stroke="#e4e9f0" stroke-width="1" opacity=".85"/><path d="M2.600 7.800c-.3 2-.6 4-.2 5.600" stroke="#dfe6ee" stroke-width=".9" fill="none" opacity=".8"/><rect x="-0.8" y="-0.500" width="6.300" height="6.300" fill="#fff"/><path d="M.3 .8h2.200c1.200 0 1.900.7 1.900 1.700s-.7 1.700-1.900 1.700H.3z" fill="none" stroke="#111" stroke-width="1.150"/></g></svg><span class="t" style="top:291.64px;font-size:12px;line-height:17px;color:#000;letter-spacing:-0.197px;left:95.20px;">Initial Values 1</span><svg style="left:75px;top:308px;overflow:visible;" width="16" height="16" viewBox="0 0 16 16"><g transform="translate(0 0) scale(1.02 1)"><path d="M3.200 2.300h10.300c1.800 0 2.500 2.500 2.500 5.700s-.7 5.700-2.500 5.700H3.200C1.200 13.700 0 11.200 0 8s1.200-5.700 3.200-5.700z" fill="#dedede" stroke="#b9b9b9" stroke-width=".6"/><path d="M3.300 6.900H16c0 0 0 .6 0 1.100 0 3.200-.7 5.700-2.500 5.700H3.400C3 12 2.900 9 3.300 6.900z" fill="#4a7ebb"/></g></svg><span class="t" style="top:308.64px;font-size:12px;line-height:17px;color:#000;letter-spacing:0.017px;left:95.20px;">Inlet temperature</span><svg style="left:75px;top:325px;overflow:visible;" width="16" height="16" viewBox="0 0 16 16"><g transform="translate(0 0) scale(1.02 1)"><path d="M3.200 2.300h10.300c1.800 0 2.500 2.500 2.500 5.700s-.7 5.700-2.500 5.700H3.200C1.200 13.700 0 11.200 0 8s1.200-5.700 3.200-5.700z" fill="#dedede" stroke="#b9b9b9" stroke-width=".6"/><path d="M3.300 6.900H16c0 0 0 .6 0 1.100 0 3.200-.7 5.700-2.500 5.700H3.400C3 12 2.900 9 3.300 6.900z" fill="#4a7ebb"/></g></svg><span class="t" style="top:325.64px;font-size:12px;line-height:17px;color:#000;letter-spacing:0.034px;left:95.20px;">Outflow 1</span><svg style="left:75px;top:342px;overflow:visible;" width="16" height="16" viewBox="0 0 16 16"><g transform="translate(0 0) scale(1.02 1)"><path d="M3.200 2.300h10.300c1.800 0 2.500 2.500 2.500 5.700s-.7 5.700-2.500 5.700H3.200C1.200 13.700 0 11.200 0 8s1.200-5.700 3.200-5.700z" fill="#dedede" stroke="#b9b9b9" stroke-width=".6"/><path d="M3.300 6.900H16c0 0 0 .6 0 1.100 0 3.200-.7 5.700-2.500 5.700H3.400C3 12 2.900 9 3.300 6.900z" fill="#4a7ebb"/></g></svg><span class="t" style="top:342.64px;font-size:12px;line-height:17px;color:#000;letter-spacing:-0.415px;left:95.20px;">Heat Flux 1</span><svg style="left:75px;top:359px;overflow:visible;" width="16" height="16" viewBox="0 0 16 16"><g transform="translate(0 0) scale(1.02 1)"><path d="M3.200 2.300h10.300c1.800 0 2.500 2.500 2.500 5.700s-.7 5.700-2.500 5.700H3.200C1.200 13.700 0 11.200 0 8s1.200-5.700 3.200-5.700z" fill="#dedede" stroke="#b9b9b9" stroke-width=".6"/><path d="M3.300 6.900H16c0 0 0 .6 0 1.100 0 3.200-.7 5.700-2.500 5.700H3.400C3 12 2.900 9 3.300 6.900z" fill="#7f7f7f"/></g></svg><span class="t" style="top:359.64px;font-size:12px;line-height:17px;color:#808080;letter-spacing:-0.239px;left:95.20px;">Convective Heat Flux 1</span><svg style="left:42.5px;top:381px;" width="8" height="8" viewBox="0 0 8 8"><path d="M6.300 .9v5.600H.7z" fill="#454545" stroke="#3a3a3a" stroke-width=".4"/></svg><svg style="left:56px;top:376px;overflow:visible;" width="16" height="16" viewBox="0 0 16 16"><g stroke="#29a9df" stroke-width="1.200" fill="none"><path d="M0 4.500c1.500-2.500 3-2.500 4.500 0s3 2.500 4.500 0 3-2.500 4.500 0 2 2 2.500 1"/><path d="M0 8.500c1.500-2 3-2 4.500 0s3 2 4.500 0 3-2 4.500 0 2 1.500 2.500.8"/><path d="M0 12.500c1.500-2.500 3-2.500 4.500 0s3 2.500 4.500 0 3-2.500 4.500 0 2 2 2.500 1"/><path d="M12 6l4-4" stroke-width=".8"/></g></svg><span class="t" style="top:376.64px;font-size:12px;line-height:17px;color:#000;letter-spacing:-0.047px;left:76.20px;">Turbulent Flow, k-ε 2</span><span class="t" style="top:376.64px;font-size:12px;line-height:17px;color:#000;font-style:italic;letter-spacing:-0.043px;left:185.50px;"> (spf2)</span><svg style="left:75px;top:393px;overflow:visible;" width="16" height="16" viewBox="0 0 16 16"><g transform="translate(0 0) scale(1.02 1)"><path d="M3.2 2.3h10.3c1.8 0 2.5 2.5 2.5 5.7s-.7 5.7-2.5 5.7H3.2C1.2 13.7 0 11.200 0 8s1.200-5.700 3.200-5.700z" fill="#4a7ebb"/><path d="M0.300 7.300H16" stroke="#e4e9f0" stroke-width="1" opacity=".85"/><path d="M2.600 7.800c-.3 2-.6 4-.2 5.600" stroke="#dfe6ee" stroke-width=".9" fill="none" opacity=".8"/><rect x="-0.8" y="-0.500" width="6.300" height="6.300" fill="#fff"/><path d="M.3 .8h2.200c1.200 0 1.900.7 1.900 1.700s-.7 1.700-1.900 1.700H.3z" fill="none" stroke="#111" stroke-width="1.150"/></g></svg><span class="t" style="top:393.64px;font-size:12px;line-height:17px;color:#000;letter-spacing:-0.225px;left:95.20px;">Fluid Properties 1</span><svg style="left:75px;top:410px;overflow:visible;" width="16" height="16" viewBox="0 0 16 16"><g transform="translate(0 0) scale(1.02 1)"><path d="M3.200 2.300h10.300c1.800 0 2.500 2.500 2.500 5.700s-.7 5.700-2.500 5.700H3.200C1.200 13.700 0 11.200 0 8s1.200-5.700 3.200-5.700z" fill="#dedede" stroke="#b9b9b9" stroke-width=".6"/><path d="M3.300 6.900H16c0 0 0 .6 0 1.100 0 3.200-.7 5.700-2.500 5.700H3.400C3 12 2.900 9 3.300 6.900z" fill="#4a7ebb"/><rect x="-0.8" y="-0.500" width="6.300" height="6.300" fill="#fff"/><path d="M.3 .8h2.200c1.200 0 1.900.7 1.900 1.700s-.7 1.700-1.900 1.700H.3z" fill="none" stroke="#111" stroke-width="1.150"/></g></svg><span class="t" style="top:410.64px;font-size:12px;line-height:17px;color:#000;letter-spacing:-0.316px;left:95.20px;">Wall 1</span><svg style="left:75px;top:427px;overflow:visible;" width="16" height="16" viewBox="0 0 16 16"><g transform="translate(0 0) scale(1.02 1)"><path d="M3.2 2.3h10.3c1.8 0 2.5 2.5 2.5 5.7s-.7 5.7-2.5 5.7H3.2C1.2 13.7 0 11.200 0 8s1.200-5.700 3.200-5.700z" fill="#4a7ebb"/><path d="M0.300 7.300H16" stroke="#e4e9f0" stroke-width="1" opacity=".85"/><path d="M2.600 7.800c-.3 2-.6 4-.2 5.600" stroke="#dfe6ee" stroke-width=".9" fill="none" opacity=".8"/><rect x="-0.8" y="-0.500" width="6.300" height="6.300" fill="#fff"/><path d="M.3 .8h2.200c1.200 0 1.900.7 1.900 1.700s-.7 1.700-1.900 1.700H.3z" fill="none" stroke="#111" stroke-width="1.150"/></g></svg><span class="t" style="top:427.64px;font-size:12px;line-height:17px;color:#000;letter-spacing:-0.197px;left:95.20px;">Initial Values 1</span><svg style="left:75px;top:444px;overflow:visible;" width="16" height="16" viewBox="0 0 16 16"><g transform="translate(0 0) scale(1.02 1)"><path d="M3.200 2.300h10.300c1.800 0 2.500 2.500 2.500 5.700s-.7 5.700-2.500 5.700H3.200C1.200 13.700 0 11.200 0 8s1.200-5.700 3.200-5.700z" fill="#dedede" stroke="#b9b9b9" stroke-width=".6"/><path d="M3.300 6.900H16c0 0 0 .6 0 1.100 0 3.200-.7 5.700-2.500 5.700H3.400C3 12 2.900 9 3.300 6.900z" fill="#4a7ebb"/></g></svg><span class="t" style="top:444.64px;font-size:12px;line-height:17px;color:#000;letter-spacing:-0.241px;left:95.20px;">Inlet 1</span><svg style="left:75px;top:461px;overflow:visible;" width="16" height="16" viewBox="0 0 16 16"><g transform="translate(0 0) scale(1.02 1)"><path d="M3.200 2.300h10.300c1.800 0 2.500 2.500 2.500 5.700s-.7 5.700-2.500 5.700H3.200C1.200 13.700 0 11.200 0 8s1.200-5.700 3.200-5.700z" fill="#dedede" stroke="#b9b9b9" stroke-width=".6"/><path d="M3.300 6.900H16c0 0 0 .6 0 1.100 0 3.200-.7 5.700-2.500 5.700H3.400C3 12 2.900 9 3.300 6.900z" fill="#4a7ebb"/></g></svg><span class="t" style="top:461.64px;font-size:12px;line-height:17px;color:#000;letter-spacing:-0.165px;left:95.20px;">Outlet 1</span><svg style="left:44px;top:481.5px;" width="7" height="10" viewBox="0 0 7 10"><path d="M1.500 1.100l4 3.400-4 3.400z" fill="#fff" stroke="#b0b0b0" stroke-width="1"/></svg><svg style="left:56px;top:478px;overflow:visible;" width="16" height="16" viewBox="0 0 16 16"><g stroke="#8a8a8a" stroke-width=".7" fill="none"><ellipse cx="8" cy="4.500" rx="4" ry="1.600"/><ellipse cx="8" cy="4.500" rx="4" ry="1.600" transform="rotate(60 8 4.500)"/><ellipse cx="8" cy="4.500" rx="4" ry="1.600" transform="rotate(-60 8 4.500)"/></g><circle cx="8" cy="4.500" r="1.300" fill="#3aa635"/><circle cx="5" cy="2.300" r=".8" fill="#4a7ebb"/><circle cx="11" cy="6" r=".8" fill="#4a7ebb"/><path d="M6.500 13v2.500h9v-2.500M10.500 13v2.500" stroke="#555" stroke-width="1" fill="none"/><path d="M2 10.500l3-3M14.500 10.500l-3-3" stroke-width="1.300" stroke="#4a7ebb"/><path d="M14.500 10.500l-3-3" stroke-width="1.300" stroke="#d6007f"/><rect x="0" y="10" width="3" height="3" fill="#4a7ebb"/><rect x="4.500" y="10" width="3" height="3.500" fill="#3aa635"/><rect x="8.500" y="10" width="3" height="3.500" fill="#e8602c"/><rect x="13" y="10" width="3" height="3" fill="#d6007f"/></svg><span class="t" style="top:478.64px;font-size:12px;line-height:17px;color:#000;letter-spacing:0.104px;left:76.20px;">Multiphysics</span><svg style="left:56px;top:495px;overflow:visible;" width="16" height="16" viewBox="0 0 16 16"><path d="M8 1L.8 14.500h14.400z" fill="#e9e4dc" stroke="#4a7ebb" stroke-width="1.300" stroke-linejoin="round"/><g stroke="#4a7ebb" stroke-width=".8" fill="none"><path d="M4.400 8h7.200M2.600 11.300h10.800M8 1v13.500M4.400 8l3.600 6.500 3.600-6.500M2.600 11.300l1.800 3.200M13.400 11.300l-1.800 3.200M6.200 4.500h3.600L8 8z"/></g></svg><span class="t" style="top:495.64px;font-size:12px;line-height:17px;color:#000;letter-spacing:-0.442px;left:76.20px;">Mesh 1</span><svg style="left:23.5px;top:517px;" width="8" height="8" viewBox="0 0 8 8"><path d="M6.300 .9v5.600H.7z" fill="#454545" stroke="#3a3a3a" stroke-width=".4"/></svg><svg style="left:37px;top:512px;overflow:visible;" width="16" height="16" viewBox="0 0 16 16"><g transform="translate(0 3.2)" stroke="#4a7ebb" stroke-width="1.100" fill="none"><path d="M.5 4c1.500-2.500 3-2 4 .5s2 3.500 3.500 3"/><circle cx="7.800" cy="5.500" r="2.300"/><circle cx="13.200" cy="5.200" r="2.300"/><path d="M9.600 3.500c.8-1.600 1.600-1.600 2.400 0" stroke-width=".9"/></g></svg><span class="t" style="top:512.64px;font-size:12px;line-height:17px;color:#000;letter-spacing:-0.428px;left:57.20px;">Study 1</span><svg style="left:56px;top:529px;overflow:visible;" width="16" height="16" viewBox="0 0 16 16"><path d="M1.500 1.500v13h13" stroke="#666" stroke-width="1" fill="none"/><path d="M1.500 0l-1.600 2.600h3.200zM16 14.500l-2.600-1.600v3.200z" fill="#666"/><path d="M3 2c1 6 3 9.500 12.500 10" stroke="#999" stroke-width=".9" fill="none"/><path d="M3.500 11c3-1 3-9 5-9s2 7.500 4 7.500h3" stroke="#4a7ebb" stroke-width="1.200" fill="none"/></svg><span class="t" style="top:529.64px;font-size:12px;line-height:17px;color:#000;letter-spacing:-0.169px;left:76.20px;">Step 1: Time Dependent</span><svg style="left:56px;top:546px;overflow:visible;" width="16" height="16" viewBox="0 0 16 16"><path d="M1.500 1.500v13h13" stroke="#666" stroke-width="1" fill="none"/><path d="M1.500 0l-1.600 2.600h3.200zM16 14.500l-2.600-1.600v3.200z" fill="#666"/><path d="M3 2c1 6 3 9.500 12.500 10" stroke="#999" stroke-width=".9" fill="none"/><path d="M3.500 11c3-1 3-9 5-9s2 7.500 4 7.500h3" stroke="#777" stroke-width="1.200" fill="none"/></svg><span class="t" style="top:546.64px;font-size:12px;line-height:17px;color:#808080;letter-spacing:-0.239px;left:76.20px;">Step 2: Time Dependent1</span><svg style="left:42.5px;top:568px;" width="8" height="8" viewBox="0 0 8 8"><path d="M6.300 .9v5.600H.7z" fill="#454545" stroke="#3a3a3a" stroke-width=".4"/></svg><svg style="left:56px;top:563px;overflow:visible;" width="16" height="16" viewBox="0 0 16 16"><g stroke="#b5b5b5" stroke-width="1"><path d="M1 2v13.500M5 5v10.500M9 8v7.500M13 11v4.500"/></g><g fill="#4a7ebb"><rect x=".5" y=".5" width="4" height="2.600"/><rect x="4.500" y="3.500" width="4" height="2.600"/><rect x="8.500" y="6.500" width="4" height="2.600"/><rect x="12.500" y="9.500" width="3.500" height="2.600"/></g></svg><span class="t" style="top:563.64px;font-size:12px;line-height:17px;color:#000;letter-spacing:-0.058px;left:76.20px;">Solver Configurations</span><svg style="left:61.5px;top:585px;" width="8" height="8" viewBox="0 0 8 8"><path d="M6.300 .9v5.600H.7z" fill="#454545" stroke="#3a3a3a" stroke-width=".4"/></svg><svg style="left:75px;top:580px;overflow:visible;" width="16" height="16" viewBox="0 0 16 16"><rect x=".6" y=".6" width="14.800" height="14.800" fill="#fff" stroke="#3ea435" stroke-width="1.200"/><g stroke="#c5c5c5" stroke-width="1"><path d="M6 9v5M10.500 12v2.500"/></g><g fill="#b0b0b0"><rect x="2" y="4" width="3.500" height="2.500"/><rect x="6" y="7" width="4" height="2.600"/></g><rect x="10.500" y="10.200" width="4" height="2.600" fill="#4a7ebb"/><path d="M13.300 2v5M11.200 5l2.100 2.300 2.100-2.300" stroke="#4a7ebb" stroke-width="1.100" fill="none"/></svg><span class="t" style="top:580.64px;font-size:12px;line-height:17px;color:#000;letter-spacing:-0.540px;left:95.20px;">Solver 1</span><svg style="left:94px;top:597px;overflow:visible;" width="16" height="16" viewBox="0 0 16 16"><text x="0" y="5.800" font-size="7.500" fill="#4a7ebb" font-family="Liberation Sans,sans-serif" font-weight="bold">∂u</text><text x="0" y="13" font-size="7.500" fill="#4a7ebb" font-family="Liberation Sans,sans-serif" font-weight="bold">∂t</text><path d="M0 7h9" stroke="#4a7ebb" stroke-width="1"/><path d="M10 5.500h2.200M10 7.500h2.200" stroke="#4a7ebb" stroke-width=".8"/><text x="12.400" y="8" font-size="8.500" fill="#4a7ebb" font-family="Liberation Sans,sans-serif" font-weight="bold">f</text><circle cx="12.8" cy="12.8" r="1.736" fill="none" stroke="#666" stroke-width="1.4"/><circle cx="12.8" cy="12.8" r="2.6599999999999997" fill="none" stroke="#666" stroke-width="1.0639999999999998" stroke-dasharray="1.0639999999999998 1.0248"/></svg><span class="t" style="top:597.64px;font-size:12px;line-height:17px;color:#000;letter-spacing:-0.056px;left:114.20px;">Compile Equations: Time Dependent</span><svg style="left:82px;top:617.5px;" width="7" height="10" viewBox="0 0 7 10"><path d="M1.500 1.100l4 3.400-4 3.400z" fill="#fff" stroke="#b0b0b0" stroke-width="1"/></svg><svg style="left:94px;top:614px;overflow:visible;" width="16" height="16" viewBox="0 0 16 16"><text x="-.3" y="10.500" font-size="9.500" fill="#3566a8" font-family="Liberation Sans,sans-serif" font-weight="bold" textLength="16.500" lengthAdjust="spacingAndGlyphs">u,v,w</text></svg><span class="t" style="top:614.64px;font-size:12px;line-height:17px;color:#000;letter-spacing:-0.271px;left:114.20px;">Dependent Variables 1</span><svg style="left:80.5px;top:636px;" width="8" height="8" viewBox="0 0 8 8"><path d="M6.300 .9v5.600H.7z" fill="#454545" stroke="#3a3a3a" stroke-width=".4"/></svg><svg style="left:94px;top:631px;overflow:visible;" width="16" height="16" viewBox="0 0 16 16"><path d="M1.500 1.500v13h9" stroke="#666" stroke-width="1" fill="none"/><path d="M1.500 0l-1.600 2.600h3.200z" fill="#666"/><path d="M3 2c1 6 2 8 6 9.500" stroke="#999" stroke-width=".9" fill="none"/><path d="M3.500 11c3-1 3-9 5-9s2 7.500 4 7.500h3" stroke="#4a7ebb" stroke-width="1.200" fill="none"/><circle cx="12.5" cy="13" r="1.736" fill="none" stroke="#666" stroke-width="1.4"/><circle cx="12.5" cy="13" r="2.6599999999999997" fill="none" stroke="#666" stroke-width="1.0639999999999998" stroke-dasharray="1.0639999999999998 1.0248"/></svg><span class="t" style="top:631.64px;font-size:12px;line-height:17px;color:#000;letter-spacing:-0.160px;left:114.20px;">Time-Dependent Solver 1</span><svg style="left:113px;top:648px;overflow:visible;" width="16" height="16" viewBox="0 0 16 16"><rect x=".7" y=".7" width="13.600" height="13.600" fill="#fff" stroke="#7b7b7b" stroke-width="1.200"/><path d="M.7 .7l13.600 13.600" stroke="#7b7b7b" stroke-width="1.700"/><rect x="6.5" y="2.5" width="1.700" height="1.700" fill="#7b7b7b"/><rect x="10.5" y="2.5" width="1.700" height="1.700" fill="#7b7b7b"/><rect x="9.5" y="5.5" width="1.700" height="1.700" fill="#7b7b7b"/><rect x="2.5" y="8.5" width="1.700" height="1.700" fill="#7b7b7b"/><rect x="3.5" y="11.5" width="1.700" height="1.700" fill="#7b7b7b"/><rect x="6.5" y="10.5" width="1.700" height="1.700" fill="#7b7b7b"/></svg><span class="t" style="top:648.64px;font-size:12px;line-height:17px;color:#808080;letter-spacing:-0.189px;left:133.20px;">Direct</span><svg style="left:113px;top:665px;overflow:visible;" width="16" height="16" viewBox="0 0 16 16"><g stroke="#666" fill="none"><path d="M3 1.500l5.500 6" stroke-width="1.800"/><path d="M2 2.800l2.500-2.300" stroke-width="1.200"/><path d="M7.500 6.500h3.500v5.500" stroke-width="1.100"/><path d="M4 12.500h10v2.500h-9" stroke-width="1.100"/></g><circle cx="8.500" cy="8" r="1.500" fill="#666"/></svg><span class="t" style="top:665.64px;font-size:12px;line-height:17px;color:#000;letter-spacing:-0.147px;left:133.20px;">Advanced</span><svg style="left:101px;top:685.5px;" width="7" height="10" viewBox="0 0 7 10"><path d="M1.500 1.100l4 3.400-4 3.400z" fill="#fff" stroke="#b0b0b0" stroke-width="1"/></svg><svg style="left:113px;top:682px;overflow:visible;" width="16" height="16" viewBox="0 0 16 16"><g fill="#666"><rect x="2" y="0" width="9" height="2.600"/><rect x="2" y="6" width="9" height="2.600"/><rect x="2" y="12" width="9" height="2.600"/></g><path d="M6.500 2.600v3.400M6.500 8.600v3.400M5 4.300h3M5 10.300h3" stroke="#4a7ebb" stroke-width="1"/></svg><span class="t" style="top:682.64px;font-size:12px;line-height:17px;color:#000;letter-spacing:-0.480px;left:133.20px;">Segregated 1</span><svg style="left:101px;top:702.5px;" width="7" height="10" viewBox="0 0 7 10"><path d="M1.500 1.100l4 3.400-4 3.400z" fill="#fff" stroke="#b0b0b0" stroke-width="1"/></svg><svg style="left:113px;top:699px;overflow:visible;" width="16" height="16" viewBox="0 0 16 16"><rect x=".7" y=".7" width="13.600" height="13.600" fill="#fff" stroke="#4a7ebb" stroke-width="1.200"/><path d="M.7 .7l13.600 13.600" stroke="#4a7ebb" stroke-width="1.800"/></svg><span class="t" style="top:699.64px;font-size:12px;line-height:17px;color:#000;letter-spacing:-0.290px;left:133.20px;">Iterative 1</span><svg style="left:113px;top:716px;overflow:visible;" width="16" height="16" viewBox="0 0 16 16"><rect x=".7" y=".7" width="13.600" height="13.600" fill="#fff" stroke="#4a7ebb" stroke-width="1.200"/><path d="M.7 .7l13.600 13.600" stroke="#4a7ebb" stroke-width="1.700"/><rect x="6.5" y="2.5" width="1.700" height="1.700" fill="#444"/><rect x="10.5" y="2.5" width="1.700" height="1.700" fill="#444"/><rect x="9.5" y="5.5" width="1.700" height="1.700" fill="#444"/><rect x="2.5" y="8.5" width="1.700" height="1.700" fill="#444"/><rect x="3.5" y="11.5" width="1.700" height="1.700" fill="#444"/><rect x="6.5" y="10.5" width="1.700" height="1.700" fill="#444"/></svg><span class="t" style="top:716.64px;font-size:12px;line-height:17px;color:#000;letter-spacing:-0.368px;left:133.20px;">Direct 1</span><svg style="left:101px;top:736.5px;" width="7" height="10" viewBox="0 0 7 10"><path d="M1.500 1.100l4 3.400-4 3.400z" fill="#fff" stroke="#b0b0b0" stroke-width="1"/></svg><svg style="left:113px;top:733px;overflow:visible;" width="16" height="16" viewBox="0 0 16 16"><rect x=".7" y=".7" width="13.600" height="13.600" fill="#fff" stroke="#4a7ebb" stroke-width="1.200"/><path d="M.7 .7l13.600 13.600" stroke="#4a7ebb" stroke-width="1.800"/></svg><span class="t" style="top:733.64px;font-size:12px;line-height:17px;color:#000;letter-spacing:-0.290px;left:133.20px;">Iterative 2</span></div><div style="left:386px;top:165px;width:18px;height:743px;background:#efefef;border-right:1px solid #e2e2e2;box-sizing:border-box;"></div><svg style="left:386px;top:166px;" width="17" height="741" viewBox="0 0 17 741"><path d="M5.200 9.300l3.300-3.800 3.300 3.800z" fill="#606060"/><path d="M5 730l3.500 4 3.500-4z" fill="#5a5a5a"/><defs><linearGradient id="sbg" x1="0" x2="1" y1="0" y2="0"><stop offset="0" stop-color="#f4f4f4"/><stop offset=".45" stop-color="#dcdcdc"/><stop offset="1" stop-color="#cfcfcf"/></linearGradient></defs><rect x="1.500" y="124.500" width="14" height="426" rx="2" fill="url(#sbg)" stroke="#979797"/><path d="M5 334.500h7M5 337.500h7M5 340.500h7" stroke="#555" stroke-width="1"/></svg>
<!-- sec_error -->
<div class="pn" style="left:415px;top:106px;width:376px;height:807px;"></div><span class="t" style="top:110.62px;font-size:21.3px;line-height:30px;color:#0670e6;letter-spacing:-0.967px;left:424.30px;-webkit-text-stroke:.45px #fafbfe;">Error</span><svg style="left:763px;top:117px;" width="22" height="14" viewBox="0 0 22 14"><path d="M0 4h8l-4 4z" fill="#6c7078"/><path d="M16 1h4v5.500h-4z" fill="#777"/><path d="M14.500 6.800h7M18 7v5" stroke="#888" stroke-width="1.200"/></svg><svg style="left:424.5px;top:144px;" width="13" height="14" viewBox="0 0 13 14"><path d="M.5 1h9M.5 4h9" stroke="#4fa03f" stroke-width="1.700"/><path d="M2.500 6.500v4h4M5 8.500l2 2-2 2" stroke="#3f63a8" stroke-width="1.100" fill="none"/><path d="M8.500 8.500h4M8.500 10.500h4M8.500 12.500h4" stroke="#999" stroke-width=".9"/></svg><span class="t" style="top:142.64px;font-size:12px;line-height:17px;color:#000;letter-spacing:-0.109px;left:442.70px;">Compute to Selected</span><svg style="left:565px;top:148px;" width="10" height="6" viewBox="0 0 10 6"><path d="M0 1h9.200M0 4.200h9.200" stroke="#4fa03f" stroke-width="1.600"/></svg><span class="t" style="top:142.64px;font-size:12px;line-height:17px;color:#000;letter-spacing:0.087px;left:581.80px;">Compute</span><div style="left:416px;top:164px;width:374px;height:24.5px;background:#dfe8f4;"></div><svg style="left:421px;top:173.5px;" width="10" height="6" viewBox="0 0 10 6"><path d="M.5 .5h8.600L4.800 5.600z" fill="#444"/></svg><span class="t" style="top:168.00px;font-size:13px;line-height:18px;color:#000;letter-spacing:0.082px;left:445.50px;">Error</span><div style="left:420px;top:196px;width:363.500px;height:52px;overflow:hidden"><span class="t" style="top:4.09px;font-size:11.3px;line-height:16px;color:#262626;font-family:'Liberation Mono',monospace;letter-spacing:0.219px;left:4.20px;">Repeated error test failures. May have reached a singularity.</span><span class="t" style="top:19.09px;font-size:11.3px;line-height:16px;color:#262626;font-family:'Liberation Mono',monospace;letter-spacing:0.219px;left:4.20px;">Time : 0.06226322946862541</span><span class="t" style="top:34.09px;font-size:11.3px;line-height:16px;color:#262626;font-family:'Liberation Mono',monospace;letter-spacing:0.219px;left:4.20px;">Last time step is not converged.</span></div><div style="left:421px;top:681px;width:365px;height:16px;background:#eeeeee;"></div><svg style="left:421px;top:681px;" width="365" height="16" viewBox="0 0 365 16"><path d="M10.500 4.500L6 8l4.500 3.500z" fill="#555"/><path d="M354.500 4.500L359 8l-4.500 3.500z" fill="#555"/><defs><linearGradient id="hsb" x1="0" x2="0" y1="0" y2="1"><stop offset="0" stop-color="#f6f6f6"/><stop offset=".45" stop-color="#e2e2e2"/><stop offset=".5" stop-color="#d2d2d2"/><stop offset="1" stop-color="#c9c9c9"/></linearGradient></defs><rect x="17.500" y="1.500" width="275" height="13" rx="2" fill="url(#hsb)" stroke="#8e8e8e"/><path d="M152.500 5v6.500M155.500 5v6.500M158.500 5v6.500" stroke="#333" stroke-width="1"/></svg>
<!-- sec_graphics -->
<div class="pn" style="left:797px;top:106px;width:467px;height:575px;"></div><div style="left:798px;top:135px;width:465px;height:1px;background:#cfcfcf;"></div><div style="left:802px;top:113px;width:63px;height:23px;background:#fafbfe;border:1px solid #cfcfcf;border-bottom:none;box-sizing:border-box;"></div><span class="t" style="top:117.00px;font-size:13px;line-height:18px;color:#2f5d9e;font-family:'DejaVu Sans',sans-serif;letter-spacing:-0.926px;left:809.70px;">Graphics</span><div style="left:869px;top:113px;width:138px;height:22px;background:#ebebeb;"></div><span class="t" style="top:116.10px;font-size:13px;line-height:18px;color:#111;font-family:'DejaVu Sans',sans-serif;letter-spacing:-0.819px;left:875.30px;">Convergence Plot 2</span><svg style="left:992px;top:120px;" width="10" height="10" viewBox="0 0 10 10"><path d="M1 1l8 8M9 1l-8 8" stroke="#8a8a8a" stroke-width="1.400"/></svg><div style="left:1011px;top:113px;width:137.5px;height:22px;background:#ebebeb;"></div><span class="t" style="top:116.10px;font-size:13px;line-height:18px;color:#111;font-family:'DejaVu Sans',sans-serif;letter-spacing:-0.819px;left:1017.30px;">Convergence Plot 1</span><svg style="left:1134px;top:120px;" width="10" height="10" viewBox="0 0 10 10"><path d="M1 1l8 8M9 1l-8 8" stroke="#8a8a8a" stroke-width="1.400"/></svg><svg style="left:1236px;top:118px;" width="24" height="14" viewBox="0 0 24 14"><path d="M0 3h8l-4 4z" fill="#6c7078"/><path d="M16 0h4v5.500h-4z" fill="#777"/><path d="M14.500 5.800h7M18 6v5.500" stroke="#888" stroke-width="1.200"/></svg><svg style="left:804.0px;top:142.5px;overflow:visible;" width="16" height="16" viewBox="0 0 16 16"><circle cx="6.500" cy="6.500" r="5" fill="#fff" stroke="#666" stroke-width="1.400"/><path d="M10.200 10.200l4.300 4.300" stroke="#666" stroke-width="2"/><path d="M4 6.500h5M6.500 4v5" stroke="#3f63a8" stroke-width="1.200"/></svg><svg style="left:828.0px;top:142.5px;overflow:visible;" width="16" height="16" viewBox="0 0 16 16"><circle cx="6.500" cy="6.500" r="5" fill="#fff" stroke="#666" stroke-width="1.400"/><path d="M10.200 10.200l4.300 4.300" stroke="#666" stroke-width="2"/><path d="M4 6.500h5" stroke="#3f63a8" stroke-width="1.200"/></svg><svg style="left:852.0px;top:142.5px;overflow:visible;" width="16" height="16" viewBox="0 0 16 16"><rect x=".5" y="3.500" width="9" height="9" fill="none" stroke="#3f63a8" stroke-width="1" stroke-dasharray="2 1.500"/><circle cx="8.500" cy="6.500" r="4.300" fill="none" stroke="#aaa" stroke-width="1.200"/><path d="M11.500 9.500l4 4.500" stroke="#aaa" stroke-width="1.800"/><path d="M6.500 6.500h4M8.500 4.500v4" stroke="#7f9fd0" stroke-width="1"/></svg><svg style="left:875.5px;top:142.5px;overflow:visible;" width="16" height="16" viewBox="0 0 16 16"><rect x="3.500" y="3.500" width="9" height="9" fill="#fff" stroke="#666" stroke-width="1"/><path d="M5.500 8h5M8 5.500v5" stroke="#555" stroke-width="1"/><path d="M8 0l2 2.500H6zM8 16l2-2.500H6zM0 8l2.500-2v4zM16 8l-2.500-2v4z" fill="#4a7ebb"/></svg><svg style="left:899.5px;top:142.5px;overflow:visible;" width="16" height="16" viewBox="0 0 16 16"><rect x=".5" y=".5" width="15" height="14" fill="#fff" stroke="#666" stroke-width="1.100"/><path d="M5.500 7.500h5M8 5v5" stroke="#555" stroke-width="1"/><path d="M8 1.500l2 2.500H6zM8 13.500l2-2.500H6zM1.500 7.500l2.500-2v4zM14.500 7.500l-2.500-2v4z" fill="#4a7ebb"/></svg><div style="left:926px;top:143px;width:1px;height:15px;background:#cfcfcf;"></div><svg style="left:940.0px;top:142.5px;overflow:visible;" width="16" height="16" viewBox="0 0 16 16"><path d="M7.500 14V2.500" stroke="#4a7ebb" stroke-width="1.200"/><path d="M7.500 .8l-2 2.800h4z" fill="#4a7ebb"/><path d="M7.500 14l-5-5.500" stroke="#4aa53c" stroke-width="1.200"/><path d="M.8 6.800l3.200.6-2.200 2.200z" fill="#4aa53c"/><path d="M7.500 14l7-4.800" stroke="#e0245e" stroke-width="1.200"/><path d="M16 7.900l-3.300.4 1.700 2.500z" fill="#e0245e"/></svg><svg style="left:964px;top:149px;" width="8" height="5" viewBox="0 0 8 5"><path d="M0 0h7l-3.500 4z" fill="#111"/></svg><svg style="left:983.0px;top:142.5px;overflow:visible;" width="16" height="16" viewBox="0 0 16 16"><path d="M2.500 2v12" stroke="#3ea435" stroke-width="1.100"/><path d="M2.500 0l-1.800 2.600h3.600z" fill="#3ea435"/><path d="M2.500 14h11" stroke="#4a7ebb" stroke-width="1.100"/><path d="M15.500 14l-2.600-1.800v3.600z" fill="#4a7ebb"/><text x="5" y="9.500" font-size="9" fill="#777" font-family="DejaVu Sans,sans-serif">xy</text></svg><svg style="left:1007.5px;top:142.5px;overflow:visible;" width="16" height="16" viewBox="0 0 16 16"><path d="M2.500 2v12" stroke="#4a7ebb" stroke-width="1.100"/><path d="M2.500 0l-1.800 2.600h3.600z" fill="#4a7ebb"/><path d="M2.500 14h11" stroke="#3ea435" stroke-width="1.100"/><path d="M15.500 14l-2.600-1.800v3.600z" fill="#3ea435"/><text x="5" y="9.500" font-size="9" fill="#777" font-family="DejaVu Sans,sans-serif">yz</text></svg><svg style="left:1031.5px;top:142.5px;overflow:visible;" width="16" height="16" viewBox="0 0 16 16"><path d="M2.500 2v12" stroke="#c22" stroke-width="1.100"/><path d="M2.500 0l-1.800 2.600h3.600z" fill="#c22"/><path d="M2.500 14h11" stroke="#4a7ebb" stroke-width="1.100"/><path d="M15.500 14l-2.600-1.800v3.600z" fill="#4a7ebb"/><text x="5" y="9.500" font-size="9" fill="#777" font-family="DejaVu Sans,sans-serif">zx</text></svg><div style="left:1058px;top:143px;width:1px;height:15px;background:#cfcfcf;"></div><svg style="left:1070.0px;top:142.5px;overflow:visible;" width="16" height="16" viewBox="0 0 16 16"><rect x=".5" y="1" width="9" height="9" rx="2.500" fill="#d9d9d9" stroke="#b5b5b5"/><rect x="5.500" y="6" width="10" height="9.500" rx="2.500" fill="#808080"/></svg><div style="left:1093px;top:141.5px;width:18px;height:18.5px;background:#cfe0f5;border:1px solid #3f73c0;border-radius:3px;box-sizing:border-box;"></div><svg style="left:1094.0px;top:142.5px;overflow:visible;" width="16" height="16" viewBox="0 0 16 16"><rect x=".7" y="1.700" width="14.600" height="12.600" rx="2.500" fill="#4a7ebb" stroke="#2b5ea8" stroke-width="1"/><path d="M4 2v12M4 5.500h11" stroke="#e8f0fa" stroke-width=".9"/></svg><svg style="left:1118.0px;top:142.5px;overflow:visible;" width="16" height="16" viewBox="0 0 16 16"><path d="M3.500 2.500h9.500c2 0 3 2.500 3 5.500s-1 5.500-3 5.500H3.500C1.500 13.500 .5 11 .5 8s1-5.500 3-5.500z" fill="#dcdcdc" stroke="#aaa" stroke-width=".8"/><path d="M3.800 7.500H16c0 3.500-1 6-3 6H4c-.6-1.800-.7-4-.2-6z" fill="#4a7ebb"/></svg><svg style="left:1142.0px;top:142.5px;overflow:visible;" width="16" height="16" viewBox="0 0 16 16"><path d="M3.500 2.500h9.500c2 0 3 2.500 3 5.500s-1 5.500-3 5.500H3.500C1.500 13.500 .5 11 .5 8s1-5.500 3-5.500z" fill="#e3e3e3" stroke="#4a7ebb" stroke-width=".8"/><path d="M4 3c-1 3-1 7 0 10M4 7.500h12" stroke="#4a7ebb" stroke-width=".9" fill="none"/></svg><svg style="left:1166.0px;top:142.5px;overflow:visible;" width="16" height="16" viewBox="0 0 16 16"><path d="M3.500 2.500h9.500c2 0 3 2.500 3 5.500s-1 5.500-3 5.500H3.500C1.500 13.500 .5 11 .5 8s1-5.500 3-5.500z" fill="#dcdcdc" stroke="#aaa" stroke-width=".8"/><path d="M1 3.500h14M1 12.500h14" stroke="#4a7ebb" stroke-width="1" stroke-dasharray="1.500 1.500"/><g fill="#4a7ebb"><circle cx="1" cy="8" r="1.200"/><circle cx="15" cy="8" r="1.200"/><circle cx="3" cy="3.500" r="1"/><circle cx="13" cy="3.500" r="1"/><circle cx="3" cy="12.500" r="1"/><circle cx="13" cy="12.500" r="1"/></g></svg><svg style="left:1190.0px;top:142.5px;overflow:visible;" width="16" height="16" viewBox="0 0 16 16"><path d="M4 4h9.500c1.500 0 2 2 2 4s-.5 4-2 4H4C2.500 12 2 10 2 8s.5-4 2-4z" fill="#ddd" stroke="#777" stroke-width="1.200"/><path d="M8 8h6.500v3.500" stroke="#666" fill="none"/><path d="M.5 1l15 14" stroke="#4a7ebb" stroke-width="1.200"/></svg><div style="left:1217px;top:143px;width:1px;height:15px;background:#cfcfcf;"></div><svg style="left:1232.0px;top:142.5px;overflow:visible;" width="16" height="16" viewBox="0 0 16 16"><path d="M3.500 2.500h9.500c2 0 3 2.500 3 5.500s-1 5.500-3 5.500H3.500C1.500 13.500 .5 11 .5 8s1-5.500 3-5.500z" fill="#dcdcdc" stroke="#aaa" stroke-width=".8"/><rect x="6" y=".5" width="8" height="6.500" fill="#cfe0f5" stroke="#4a7ebb" stroke-width="1" stroke-dasharray="1.500 1"/><rect x="8" y="2.500" width="4" height="2.500" fill="#4a7ebb"/></svg><svg style="left:805.0px;top:163.3px;overflow:visible;" width="16" height="16" viewBox="0 0 16 16"><path d="M3.500 2.500h9.500c2 0 3 2.500 3 5.500s-1 5.500-3 5.500H3.500C1.500 13.500 .5 11 .5 8s1-5.500 3-5.500z" fill="#4a7ebb"/><rect x="4.500" y="0.500" width="9" height="6.500" fill="#dce8f6" stroke="#4a7ebb" stroke-width="1" stroke-dasharray="1.500 1"/><rect x="6.500" y="2.500" width="5" height="3" fill="#9db9dd"/></svg><svg style="left:829.0px;top:163.3px;overflow:visible;" width="16" height="16" viewBox="0 0 16 16"><rect x=".6" y=".6" width="13.500" height="13.500" fill="none" stroke="#4a7ebb" stroke-width="1.100" stroke-dasharray="2.500 1.500"/><rect x="3.500" y="3.500" width="7" height="7" fill="#9db9dd"/><path d="M7 6.500l8 7-3.300.2-1.700 2.300z" fill="#3f63a8"/></svg><svg style="left:852.0px;top:163.3px;overflow:visible;" width="16" height="16" viewBox="0 0 16 16"><rect x="1.600" y="1.600" width="13" height="13" fill="none" stroke="#4a7ebb" stroke-width="1.100" stroke-dasharray="2.500 1.500"/><path d="M7 4.500h5.500v7z" fill="#9db9dd"/><path d="M1 .5l6 10" stroke="#8a5a2b" stroke-width="1.300"/><path d="M5.500 9l4.500 5.500-4 1.500-2-5.500z" fill="#e2b97c" stroke="#b98545" stroke-width=".6"/></svg><div style="left:879px;top:164px;width:1px;height:15px;background:#cfcfcf;"></div><svg style="left:893.0px;top:163.3px;overflow:visible;" width="16" height="16" viewBox="0 0 16 16"><path d="M1 8c3.500-4.500 10.500-4.500 14 0-3.500 4.500-10.500 4.500-14 0z" fill="none" stroke="#a8a8a8" stroke-width="1"/><circle cx="8" cy="8" r="2.200" fill="#a8a8a8"/><path d="M2.500 3l11 10" stroke="#a8a8a8" stroke-width="1.200"/></svg><svg style="left:916.5px;top:163.3px;overflow:visible;" width="16" height="16" viewBox="0 0 16 16"><rect x=".6" y="1.600" width="14.800" height="12.800" fill="#fff" stroke="#4a7ebb" stroke-width="1.200"/><path d="M.6 4h14.800" stroke="#4a7ebb" stroke-width="1"/><path d="M3 9c2.500-3 7.500-3 10 0-2.500 3-7.500 3-10 0z" fill="#555"/><circle cx="8" cy="9" r="1.400" fill="#fff"/></svg><svg style="left:940.0px;top:163.3px;overflow:visible;" width="16" height="16" viewBox="0 0 16 16"><rect x=".6" y="1.600" width="14.800" height="12.800" fill="#fff" stroke="#4a7ebb" stroke-width="1.200"/><path d="M.6 4h14.800" stroke="#4a7ebb" stroke-width="1"/><path d="M3 9c2.500-3 7.500-3 10 0-2.500 3-7.500 3-10 0z" fill="none" stroke="#aaa" stroke-width=".9"/><path d="M4 5.500l8 7" stroke="#aaa" stroke-width="1"/></svg><div style="left:963px;top:162px;width:18.5px;height:19px;background:#cfe0f5;border:1.500px solid #2b5ea8;border-radius:3px;box-sizing:border-box;"></div><svg style="left:964.2px;top:163.5px;overflow:visible;" width="16" height="16" viewBox="0 0 16 16"><rect x="2" y="2" width="12" height="12" fill="#eaf1fb" stroke="#4a7ebb" stroke-width=".8"/><path d="M4 6c2-2 6-2 8 0-2 2-6 2-8 0z" fill="#4a7ebb"/><path d="M4 10.500c2-2 6-2 8 0-2 2-6 2-8 0z" fill="none" stroke="#999" stroke-width=".8"/><path d="M5 8.500l6 4" stroke="#999" stroke-width=".8"/></svg><svg style="left:988.5px;top:163.3px;overflow:visible;" width="16" height="16" viewBox="0 0 16 16"><path d="M13 8.500a5 5 0 1 1-2-4.300" fill="none" stroke="#4a7ebb" stroke-width="1.300"/><path d="M9.500 1l3.500 3.500-4.500 1z" fill="#4a7ebb"/></svg><div style="left:1015px;top:164px;width:1px;height:15px;background:#cfcfcf;"></div><svg style="left:1027.0px;top:163.3px;overflow:visible;" width="16" height="16" viewBox="0 0 16 16"><path d="M1 8l8.500-5.500v11z" fill="#4a7ebb"/><path d="M9.500 5h2c1.300.3 2 1.600 2 3s-.7 2.700-2 3h-2z" fill="#4a7ebb"/></svg><svg style="left:1052.0px;top:163.3px;overflow:visible;" width="16" height="16" viewBox="0 0 16 16"><path d="M.8 2.500h11v9.500H.8z" fill="#dce8f6" stroke="#4a7ebb" stroke-width="1"/><path d="M4.500 5h11v9.500h-11z" fill="#c9dbf0" stroke="#4a7ebb" stroke-width="1.100"/><path d="M.8 2.500l3.700 2.500M11.800 2.500l3.700 2.500M.8 12l3.700 2.500" stroke="#4a7ebb" stroke-width=".8"/></svg><div style="left:1075px;top:162px;width:18.5px;height:19px;background:#cfe0f5;border:1.500px solid #2b5ea8;border-radius:3px;box-sizing:border-box;"></div><svg style="left:1076.2px;top:163.5px;overflow:visible;" width="16" height="16" viewBox="0 0 16 16"><rect x="1.500" y="2" width="13" height="12" rx="1.500" fill="#bcd3ee" stroke="#4a7ebb" stroke-width="1.100"/><rect x="4" y="4.500" width="8" height="7" fill="#dce8f6" stroke="#4a7ebb" stroke-width="1"/><path d="M1.500 2l2.500 2.500M14.500 2L12 4.500M1.500 14l2.500-2.500M14.500 14L12 11.500" stroke="#4a7ebb" stroke-width=".8"/></svg><div style="left:1103px;top:164px;width:1px;height:15px;background:#cfcfcf;"></div><svg style="left:1116.0px;top:163.3px;overflow:visible;" width="16" height="16" viewBox="0 0 16 16"><path d="M.5 4.500h3.500l1.500-2.500h5l1.500 2.500h3.500v10H.5z" fill="#4a7ebb"/><circle cx="8" cy="9" r="3.400" fill="#fff"/><circle cx="8" cy="9" r="2" fill="#4a7ebb"/></svg><svg style="left:1140.0px;top:163.3px;overflow:visible;" width="16" height="16" viewBox="0 0 16 16"><rect x="3.500" y=".6" width="9" height="5" fill="#fff" stroke="#4a7ebb" stroke-width="1.100"/><rect x=".5" y="5.500" width="15" height="7" fill="#4a7ebb"/><rect x="3.500" y="10" width="9" height="5.500" fill="#fff" stroke="#4a7ebb" stroke-width="1.100"/><rect x="11" y="7" width="3" height="1.200" fill="#fff"/></svg><div style="left:798px;top:183px;width:465px;height:1px;background:#fff;"></div><div style="left:798px;top:184px;width:465px;height:496px;overflow:hidden;background:linear-gradient(#74c2e7 0,#80c7e9 2px,#cde9f6 100%)"><svg style="left:0px;top:0px;" width="465" height="496" viewBox="0 0 465 496"><g fill="none" stroke="#75645e" stroke-width=".8" opacity=".8"><path d="M60.7 18.6 L432.0 18.6"/><path d="M66.4 89.9 L431.0 89.9"/><path d="M72.0 158.8 L431.0 158.8"/><path d="M77.0 226.2 L431.0 226.2"/><path d="M75.8 254.9 L432.0 256.1"/><path d="M66.0 302.7 L430.0 303.9"/><path d="M57.0 352.5 L428.0 353.7"/><path d="M47.6 403.5 L428.0 404.7"/><path d="M38.0 457.3 L426.4 461.6"/><path d="M77.1 18.6 L93.0 241.0 L53.2 467.0"/><path d="M161.1 18.6 L173.5 241.0 L141.4 471.0"/><path d="M245.3 18.6 L252.5 241.0 L229.5 471.0"/><path d="M329.7 18.6 L334.0 241.0 L319.5 471.0"/><path d="M414.6 18.6 L415.6 241.0 L408.8 473.0"/><path d="M43.9 26.0 L0.0 222.0"/><path d="M42.0 36.0 L61.5 234.0"/><path d="M32.5 78.0 L49.0 291.0"/><path d="M21.5 126.0 L44.0 356.0"/><path d="M8.5 184.0 L35.5 428.0"/><path d="M0.0 211.0 L21.5 453.0"/><path d="M55.7 167.0 L7.0 406.0"/><path d="M61.8 234.0 L19.0 453.0"/><path d="M31.0 184.0 L2.0 316.0"/></g><g fill="none" stroke="#0a0a0a" stroke-width=".95" opacity=".92"><path d="M429.5 140.4 L428.9 159.3 L427.1 173.2 L424.1 185.6 L420.0 197.0 L414.6 207.4 L408.1 217.2 L400.5 226.2 L391.8 234.5 L381.9 242.1 L371.0 248.9 L359.0 255.1 L345.9 260.5 L331.7 265.1 L316.3 269.0 L299.6 272.1 L281.4 274.5 L260.9 276.1 L233.0 277.0 L205.1 277.1 L184.6 276.3 L166.4 274.6 L149.7 272.1 L134.3 268.7 L120.1 264.6 L107.0 259.7 L95.0 254.0 L84.1 247.5 L74.2 240.3 L65.5 232.3 L57.9 223.6 L51.4 214.1 L46.0 203.8 L41.9 192.6 L38.9 180.3 L37.1 166.5 L36.5 147.6 L37.2 137.3 L39.5 127.1 L43.2 116.9 L48.4 107.0 L54.9 97.4 L62.8 88.1 L72.0 79.3 L82.5 70.9 L94.1 63.1 L106.7 55.9 L120.3 49.4 L134.7 43.6 L150.0 38.6 L165.8 34.3 L182.1 31.0 L198.9 28.4 L215.9 26.8 L233.0 26.0 L250.1 26.1 L267.1 27.2 L283.9 29.1 L300.2 31.9 L316.0 35.5 L331.2 40.0 L345.7 45.3 L359.3 51.3 L371.9 58.0 L383.5 65.4 L394.0 73.4 L403.2 81.9 L411.1 90.9 L417.6 100.3 L422.8 110.0 L426.5 120.0 L428.8 130.1Z"/><path d="M428.4 148.0 L427.7 155.3 L425.5 162.7 L421.8 169.9 L416.7 177.1 L410.2 184.1 L402.4 190.9 L393.3 197.4 L383.0 203.6 L371.6 209.5 L359.1 214.9 L345.7 219.9 L331.4 224.4 L316.4 228.4 L300.8 231.8 L284.6 234.6 L268.1 236.9 L251.3 238.5 L234.4 239.5 L217.5 239.9 L200.7 239.6 L184.2 238.7 L168.0 237.1 L152.4 234.9 L137.4 232.2 L123.1 228.8 L109.7 224.9 L97.2 220.5 L85.8 215.5 L75.5 210.1 L66.4 204.3 L58.6 198.2 L52.1 191.7 L47.0 184.9 L43.3 177.9 L41.1 170.8 L40.4 163.5 L41.1 155.4 L43.3 147.2 L47.0 139.2 L52.1 131.2 L58.6 123.5 L66.4 116.0 L75.5 108.8 L85.8 101.9 L97.2 95.5 L109.7 89.5 L123.1 84.0 L137.4 79.1 L152.4 74.7 L168.0 71.0 L184.2 67.9 L200.7 65.5 L217.5 63.8 L234.4 62.8 L251.3 62.4 L268.1 62.8 L284.6 63.9 L300.8 65.7 L316.4 68.2 L331.4 71.3 L345.7 75.1 L359.1 79.5 L371.6 84.5 L383.0 90.0 L393.3 96.1 L402.4 102.5 L410.2 109.4 L416.7 116.7 L421.8 124.2 L425.5 132.0 L427.7 139.9Z"/><path d="M430.5 306.6 L429.8 316.5 L427.6 326.3 L424.0 336.0 L419.1 345.5 L412.7 354.8 L405.1 363.7 L396.2 372.2 L386.2 380.3 L375.0 387.8 L362.8 394.7 L349.7 401.0 L335.8 406.7 L321.1 411.6 L305.8 415.7 L290.0 419.0 L273.9 421.5 L257.5 423.2 L241.0 424.0 L224.5 424.0 L208.1 423.0 L192.0 421.3 L176.2 418.7 L160.9 415.3 L146.2 411.1 L132.3 406.1 L119.2 400.4 L107.0 394.0 L95.8 387.0 L85.8 379.4 L76.9 371.3 L69.3 362.7 L62.9 353.8 L58.0 344.5 L54.4 335.0 L52.2 325.2 L51.5 315.4 L52.2 305.8 L54.4 296.2 L58.0 286.8 L62.9 277.5 L69.3 268.5 L76.9 259.8 L85.8 251.5 L95.8 243.7 L107.0 236.3 L119.2 229.6 L132.3 223.4 L146.2 217.9 L160.9 213.2 L176.2 209.1 L192.0 205.9 L208.1 203.4 L224.5 201.8 L241.0 201.0 L257.5 201.0 L273.9 201.9 L290.0 203.6 L305.8 206.1 L321.1 209.4 L335.7 213.5 L349.7 218.4 L362.8 223.9 L375.0 230.1 L386.2 236.9 L396.2 244.3 L405.1 252.2 L412.7 260.5 L419.1 269.2 L424.0 278.3 L427.6 287.6 L429.8 297.0Z"/><path d="M429.0 334.0 L428.3 344.0 L426.2 354.0 L422.6 364.0 L417.7 373.8 L411.5 383.4 L403.9 392.7 L395.2 401.6 L385.3 410.1 L374.2 418.1 L362.2 425.6 L349.3 432.4 L335.5 438.6 L321.0 444.0 L306.0 448.7 L290.4 452.7 L274.5 455.8 L258.3 458.0 L242.0 459.4 L225.7 459.9 L209.5 459.6 L193.6 458.3 L178.0 456.3 L163.0 453.3 L148.5 449.6 L134.7 445.0 L121.8 439.7 L109.8 433.7 L98.7 427.0 L88.8 419.6 L80.1 411.7 L72.5 403.3 L66.3 394.5 L61.4 385.2 L57.8 375.7 L55.7 365.9 L55.0 356.0 L55.7 346.3 L57.8 336.6 L61.4 326.9 L66.3 317.4 L72.5 308.1 L80.1 299.0 L88.8 290.3 L98.7 282.1 L109.8 274.3 L121.8 267.0 L134.7 260.4 L148.5 254.4 L163.0 249.0 L178.0 244.5 L193.6 240.6 L209.5 237.6 L225.7 235.4 L242.0 234.0 L258.3 233.5 L274.5 233.8 L290.4 234.9 L306.0 236.9 L321.0 239.8 L335.5 243.4 L349.3 247.8 L362.2 252.9 L374.2 258.7 L385.3 265.2 L395.2 272.3 L403.9 280.0 L411.5 288.1 L417.7 296.7 L422.6 305.6 L426.2 314.9 L428.3 324.4Z"/><path d="M36.8 138.0 L40.4 163.5 L48.5 266.0 L52.7 306.0 L55.3 356.0"/><path d="M429.2 129.0 L429.2 163.5 L430.0 313.0 L429.0 356.0"/><path d="M40.4 163.5 L124.0 163.5"/><path d="M322.0 164.6 L428.7 164.6"/><path d="M52.7 306.3 L133.5 306.3"/><path d="M326.0 308.3 L429.5 308.3"/><path d="M344.4 165.9 L344.0 171.1 L342.7 176.3 L340.6 181.4 L337.7 186.4 L334.1 191.3 L329.6 195.9 L324.4 200.4 L318.6 204.5 L312.1 208.4 L305.0 211.9 L297.3 215.1 L289.2 217.9 L280.7 220.4 L271.8 222.4 L262.6 224.0 L253.2 225.1 L243.6 225.8 L234.0 226.0 L224.4 225.8 L214.8 225.1 L205.4 224.0 L196.2 222.4 L187.3 220.4 L178.8 217.9 L170.7 215.1 L163.0 211.9 L155.9 208.4 L149.4 204.5 L143.6 200.4 L138.4 195.9 L133.9 191.3 L130.3 186.4 L127.4 181.4 L125.3 176.3 L124.0 171.1 L123.6 165.9 L124.0 160.6 L125.3 155.4 L127.4 150.3 L130.3 145.3 L133.9 140.4 L138.4 135.8 L143.6 131.3 L149.4 127.2 L155.9 123.3 L163.0 119.8 L170.7 116.6 L178.8 113.8 L187.3 111.3 L196.2 109.3 L205.4 107.7 L214.8 106.6 L224.4 105.9 L234.0 105.7 L243.6 105.9 L253.2 106.6 L262.6 107.7 L271.8 109.3 L280.7 111.3 L289.2 113.8 L297.3 116.6 L305.0 119.8 L312.1 123.3 L318.6 127.2 L324.4 131.3 L329.6 135.8 L334.1 140.4 L337.7 145.3 L340.6 150.3 L342.7 155.4 L344.0 160.6Z"/><path d="M300.5 165.0 L300.2 168.1 L299.5 171.3 L298.2 174.3 L296.5 177.3 L294.3 180.2 L291.6 183.0 L288.5 185.6 L284.9 188.1 L281.0 190.5 L276.7 192.6 L272.1 194.5 L267.2 196.2 L262.1 197.6 L256.7 198.8 L251.2 199.8 L245.5 200.5 L239.8 200.9 L234.0 201.0 L228.2 200.9 L222.5 200.5 L216.8 199.8 L211.3 198.8 L205.9 197.6 L200.8 196.2 L195.9 194.5 L191.3 192.6 L187.0 190.5 L183.1 188.1 L179.5 185.6 L176.4 183.0 L173.7 180.2 L171.5 177.3 L169.8 174.3 L168.5 171.3 L167.8 168.1 L167.5 165.0 L167.8 161.9 L168.5 158.7 L169.8 155.7 L171.5 152.7 L173.7 149.8 L176.4 147.0 L179.5 144.4 L183.1 141.9 L187.0 139.5 L191.3 137.4 L195.9 135.5 L200.8 133.8 L205.9 132.4 L211.3 131.2 L216.8 130.2 L222.5 129.5 L228.2 129.1 L234.0 129.0 L239.8 129.1 L245.5 129.5 L251.2 130.2 L256.7 131.2 L262.1 132.4 L267.2 133.8 L272.1 135.5 L276.7 137.4 L281.0 139.5 L284.9 141.9 L288.5 144.4 L291.6 147.0 L294.3 149.8 L296.5 152.7 L298.2 155.7 L299.5 158.7 L300.2 161.9Z"/><path d="M322.5 165.4 L322.2 169.6 L321.2 173.8 L319.5 177.9 L317.2 181.9 L314.2 185.7 L310.6 189.4 L306.5 193.0 L301.8 196.3 L296.6 199.4 L290.9 202.2 L284.8 204.8 L278.2 207.0 L271.4 209.0 L264.3 210.6 L256.9 211.8 L249.4 212.7 L241.7 213.3 L234.0 213.4 L226.3 213.3 L218.6 212.7 L211.1 211.8 L203.7 210.6 L196.6 209.0 L189.8 207.0 L183.2 204.8 L177.1 202.2 L171.4 199.4 L166.2 196.3 L161.5 193.0 L157.4 189.4 L153.8 185.7 L150.8 181.9 L148.5 177.9 L146.8 173.8 L145.8 169.6 L145.5 165.4 L145.8 161.3 L146.8 157.1 L148.5 153.0 L150.8 149.0 L153.8 145.2 L157.4 141.4 L161.5 137.9 L166.2 134.6 L171.4 131.5 L177.1 128.7 L183.2 126.1 L189.8 123.9 L196.6 121.9 L203.7 120.3 L211.1 119.1 L218.6 118.2 L226.3 117.6 L234.0 117.4 L241.7 117.6 L249.4 118.2 L256.9 119.1 L264.3 120.3 L271.4 121.9 L278.2 123.9 L284.8 126.1 L290.9 128.7 L296.6 131.5 L301.8 134.6 L306.5 137.9 L310.6 141.4 L314.2 145.2 L317.2 149.0 L319.5 153.0 L321.2 157.1 L322.2 161.3Z"/><path d="M322.5 146.7 L322.2 150.9 L321.2 155.0 L319.5 159.1 L317.2 163.1 L314.2 167.0 L310.6 170.7 L306.5 174.2 L301.8 177.6 L296.6 180.6 L290.9 183.5 L284.8 186.0 L278.2 188.3 L271.4 190.2 L264.3 191.8 L256.9 193.1 L249.4 194.0 L241.7 194.5 L234.0 194.7 L226.3 194.5 L218.6 194.0 L211.1 193.1 L203.7 191.8 L196.6 190.2 L189.8 188.3 L183.2 186.0 L177.1 183.5 L171.4 180.6 L166.2 177.6 L161.5 174.2 L157.4 170.7 L153.8 167.0 L150.8 163.1 L148.5 159.1 L146.8 155.0 L145.8 150.9 L145.5 146.7 L145.8 142.5 L146.8 138.4 L148.5 134.3 L150.8 130.3 L153.8 126.4 L157.4 122.7 L161.5 119.2 L166.2 115.8 L171.4 112.8 L177.1 109.9 L183.2 107.4 L189.8 105.1 L196.6 103.2 L203.7 101.6 L211.1 100.3 L218.6 99.4 L226.3 98.9 L234.0 98.7 L241.7 98.9 L249.4 99.4 L256.9 100.3 L264.3 101.6 L271.4 103.2 L278.2 105.1 L284.8 107.4 L290.9 109.9 L296.6 112.8 L301.8 115.8 L306.5 119.2 L310.6 122.7 L314.2 126.4 L317.2 130.3 L319.5 134.3 L321.2 138.4 L322.2 142.5Z"/><path d="M322.5 183.6 L322.2 187.8 L321.2 192.0 L319.5 196.2 L317.2 200.2 L314.2 204.1 L310.6 207.9 L306.5 211.5 L301.8 214.8 L296.6 218.0 L290.9 220.8 L284.8 223.4 L278.2 225.7 L271.4 227.6 L264.3 229.3 L256.9 230.5 L249.4 231.5 L241.7 232.0 L234.0 232.2 L226.3 232.0 L218.6 231.5 L211.1 230.5 L203.7 229.3 L196.6 227.6 L189.8 225.7 L183.2 223.4 L177.1 220.8 L171.4 218.0 L166.2 214.8 L161.5 211.5 L157.4 207.9 L153.8 204.1 L150.8 200.2 L148.5 196.2 L146.8 192.0 L145.8 187.8 L145.5 183.6 L145.8 179.4 L146.8 175.2 L148.5 171.0 L150.8 167.0 L153.8 163.1 L157.4 159.3 L161.5 155.7 L166.2 152.4 L171.4 149.2 L177.1 146.4 L183.2 143.8 L189.8 141.5 L196.6 139.6 L203.7 137.9 L211.1 136.7 L218.6 135.7 L226.3 135.2 L234.0 135.0 L241.7 135.2 L249.4 135.7 L256.9 136.7 L264.3 137.9 L271.4 139.6 L278.2 141.5 L284.8 143.8 L290.9 146.4 L296.6 149.2 L301.8 152.4 L306.5 155.7 L310.6 159.3 L314.2 163.1 L317.2 167.0 L319.5 171.0 L321.2 175.2 L322.2 179.4Z"/><path d="M167.5 163.5 L167.4 165.2 L167.1 166.8 L166.7 168.4 L166.1 170.0 L165.4 171.6 L164.5 173.1 L163.5 174.5 L162.4 175.8 L161.1 177.0 L159.7 178.1 L158.2 179.1 L156.6 180.0 L154.9 180.8 L153.2 181.4 L151.4 181.9 L149.5 182.3 L147.6 182.5 L145.8 182.6 L143.9 182.5 L142.0 182.3 L140.1 181.9 L138.3 181.4 L136.6 180.8 L134.9 180.0 L133.3 179.1 L131.8 178.1 L130.4 177.0 L129.1 175.8 L128.0 174.5 L127.0 173.1 L126.1 171.6 L125.4 170.0 L124.8 168.4 L124.4 166.8 L124.1 165.2 L124.0 163.5 L124.1 161.8 L124.4 160.2 L124.8 158.6 L125.4 157.0 L126.1 155.4 L127.0 153.9 L128.0 152.5 L129.1 151.2 L130.4 150.0 L131.8 148.9 L133.3 147.9 L134.9 147.0 L136.6 146.2 L138.3 145.6 L140.1 145.1 L142.0 144.7 L143.9 144.5 L145.8 144.4 L147.6 144.5 L149.5 144.7 L151.4 145.1 L153.2 145.6 L154.9 146.2 L156.6 147.0 L158.2 147.9 L159.7 148.9 L161.1 150.0 L162.4 151.2 L163.5 152.5 L164.5 153.9 L165.4 155.4 L166.1 157.0 L166.7 158.6 L167.1 160.2 L167.4 161.8Z"/><path d="M344.1 164.0 L344.0 165.7 L343.8 167.3 L343.3 168.9 L342.8 170.5 L342.0 172.1 L341.1 173.6 L340.1 175.0 L338.9 176.3 L337.6 177.5 L336.1 178.6 L334.6 179.6 L333.0 180.5 L331.2 181.3 L329.4 181.9 L327.6 182.4 L325.7 182.8 L323.7 183.0 L321.8 183.1 L319.9 183.0 L317.9 182.8 L316.0 182.4 L314.2 181.9 L312.4 181.3 L310.6 180.5 L309.0 179.6 L307.5 178.6 L306.0 177.5 L304.7 176.3 L303.5 175.0 L302.5 173.6 L301.6 172.1 L300.8 170.5 L300.3 168.9 L299.8 167.3 L299.6 165.7 L299.5 164.0 L299.6 162.3 L299.8 160.7 L300.3 159.1 L300.8 157.5 L301.6 155.9 L302.5 154.4 L303.5 153.0 L304.7 151.7 L306.0 150.5 L307.5 149.4 L309.0 148.4 L310.6 147.5 L312.4 146.7 L314.2 146.1 L316.0 145.6 L317.9 145.2 L319.9 145.0 L321.8 144.9 L323.7 145.0 L325.7 145.2 L327.6 145.6 L329.4 146.1 L331.2 146.7 L333.0 147.5 L334.6 148.4 L336.1 149.4 L337.6 150.5 L338.9 151.7 L340.1 153.0 L341.1 154.4 L342.0 155.9 L342.8 157.5 L343.3 159.1 L343.8 160.7 L344.0 162.3Z"/><path d="M347.8 307.8 L347.4 313.2 L346.2 318.6 L344.1 323.9 L341.3 329.1 L337.7 334.1 L333.4 338.9 L328.4 343.5 L322.7 347.8 L316.4 351.8 L309.5 355.4 L302.0 358.8 L294.2 361.7 L285.8 364.2 L277.2 366.2 L268.3 367.9 L259.1 369.1 L249.9 369.8 L240.5 370.0 L231.1 369.8 L221.9 369.1 L212.7 367.9 L203.8 366.2 L195.2 364.2 L186.9 361.7 L179.0 358.8 L171.5 355.4 L164.6 351.8 L158.3 347.8 L152.6 343.5 L147.6 338.9 L143.3 334.1 L139.7 329.1 L136.9 323.9 L134.8 318.6 L133.6 313.2 L133.2 307.8 L133.6 302.4 L134.8 297.0 L136.9 291.7 L139.7 286.5 L143.3 281.5 L147.6 276.7 L152.6 272.1 L158.3 267.8 L164.6 263.8 L171.5 260.2 L179.0 256.8 L186.8 253.9 L195.2 251.4 L203.8 249.4 L212.7 247.7 L221.9 246.5 L231.1 245.8 L240.5 245.6 L249.9 245.8 L259.1 246.5 L268.3 247.7 L277.2 249.4 L285.8 251.4 L294.1 253.9 L302.0 256.8 L309.5 260.2 L316.4 263.8 L322.7 267.8 L328.4 272.1 L333.4 276.7 L337.7 281.5 L341.3 286.5 L344.1 291.7 L346.2 297.0 L347.4 302.4Z"/><path d="M305.0 307.8 L304.8 311.1 L304.0 314.3 L302.8 317.5 L301.1 320.6 L299.0 323.6 L296.4 326.5 L293.3 329.3 L289.9 331.8 L286.1 334.2 L282.0 336.5 L277.5 338.4 L272.8 340.2 L267.8 341.7 L262.6 342.9 L257.2 343.9 L251.7 344.6 L246.1 345.1 L240.5 345.2 L234.9 345.1 L229.3 344.6 L223.8 343.9 L218.4 342.9 L213.2 341.7 L208.2 340.2 L203.5 338.4 L199.0 336.5 L194.9 334.2 L191.1 331.8 L187.7 329.3 L184.6 326.5 L182.0 323.6 L179.9 320.6 L178.2 317.5 L177.0 314.3 L176.2 311.1 L176.0 307.8 L176.2 304.5 L177.0 301.3 L178.2 298.1 L179.9 295.0 L182.0 292.0 L184.6 289.1 L187.7 286.3 L191.1 283.8 L194.9 281.4 L199.0 279.1 L203.5 277.2 L208.2 275.4 L213.2 273.9 L218.4 272.7 L223.8 271.7 L229.3 271.0 L234.9 270.5 L240.5 270.4 L246.1 270.5 L251.7 271.0 L257.2 271.7 L262.6 272.7 L267.8 273.9 L272.8 275.4 L277.5 277.2 L282.0 279.1 L286.1 281.4 L289.9 283.8 L293.3 286.3 L296.4 289.1 L299.0 292.0 L301.1 295.0 L302.8 298.1 L304.0 301.3 L304.8 304.5Z"/><path d="M326.5 307.8 L326.2 312.1 L325.2 316.5 L323.6 320.7 L321.3 324.9 L318.4 328.9 L315.0 332.8 L310.9 336.4 L306.4 339.9 L301.3 343.1 L295.8 346.0 L289.8 348.7 L283.5 351.0 L276.8 353.0 L269.9 354.7 L262.8 356.0 L255.4 356.9 L248.0 357.5 L240.5 357.7 L233.0 357.5 L225.6 356.9 L218.2 356.0 L211.1 354.7 L204.2 353.0 L197.5 351.0 L191.2 348.7 L185.2 346.0 L179.7 343.1 L174.6 339.9 L170.1 336.4 L166.0 332.8 L162.6 328.9 L159.7 324.9 L157.4 320.7 L155.8 316.5 L154.8 312.1 L154.5 307.8 L154.8 303.5 L155.8 299.1 L157.4 294.9 L159.7 290.7 L162.6 286.7 L166.0 282.9 L170.1 279.2 L174.6 275.7 L179.7 272.5 L185.2 269.6 L191.2 266.9 L197.5 264.6 L204.2 262.6 L211.1 260.9 L218.2 259.6 L225.6 258.7 L233.0 258.1 L240.5 257.9 L248.0 258.1 L255.4 258.7 L262.8 259.6 L269.9 260.9 L276.8 262.6 L283.5 264.6 L289.8 266.9 L295.8 269.6 L301.3 272.5 L306.4 275.7 L310.9 279.2 L315.0 282.9 L318.4 286.7 L321.3 290.7 L323.6 294.9 L325.2 299.1 L326.2 303.5Z"/><path d="M326.5 290.2 L326.2 294.5 L325.2 298.9 L323.6 303.1 L321.3 307.3 L318.4 311.3 L315.0 315.1 L310.9 318.8 L306.4 322.3 L301.3 325.5 L295.8 328.4 L289.8 331.1 L283.5 333.4 L276.8 335.4 L269.9 337.1 L262.8 338.4 L255.4 339.3 L248.0 339.9 L240.5 340.1 L233.0 339.9 L225.6 339.3 L218.2 338.4 L211.1 337.1 L204.2 335.4 L197.5 333.4 L191.2 331.1 L185.2 328.4 L179.7 325.5 L174.6 322.3 L170.1 318.8 L166.0 315.1 L162.6 311.3 L159.7 307.3 L157.4 303.1 L155.8 298.9 L154.8 294.5 L154.5 290.2 L154.8 285.9 L155.8 281.5 L157.4 277.3 L159.7 273.1 L162.6 269.1 L166.0 265.2 L170.1 261.6 L174.6 258.1 L179.7 254.9 L185.2 252.0 L191.2 249.3 L197.5 247.0 L204.2 245.0 L211.1 243.3 L218.2 242.0 L225.6 241.1 L233.0 240.5 L240.5 240.3 L248.0 240.5 L255.4 241.1 L262.8 242.0 L269.9 243.3 L276.8 245.0 L283.5 247.0 L289.8 249.3 L295.8 252.0 L301.3 254.9 L306.4 258.1 L310.9 261.6 L315.0 265.2 L318.4 269.1 L321.3 273.1 L323.6 277.3 L325.2 281.5 L326.2 285.9Z"/><path d="M326.5 325.4 L326.2 329.7 L325.2 334.1 L323.6 338.3 L321.3 342.5 L318.4 346.5 L315.0 350.4 L310.9 354.0 L306.4 357.5 L301.3 360.7 L295.8 363.6 L289.8 366.3 L283.5 368.6 L276.8 370.6 L269.9 372.3 L262.8 373.6 L255.4 374.5 L248.0 375.1 L240.5 375.3 L233.0 375.1 L225.6 374.5 L218.2 373.6 L211.1 372.3 L204.2 370.6 L197.5 368.6 L191.2 366.3 L185.2 363.6 L179.7 360.7 L174.6 357.5 L170.1 354.0 L166.0 350.4 L162.6 346.5 L159.7 342.5 L157.4 338.3 L155.8 334.1 L154.8 329.7 L154.5 325.4 L154.8 321.1 L155.8 316.7 L157.4 312.5 L159.7 308.3 L162.6 304.3 L166.0 300.4 L170.1 296.8 L174.6 293.3 L179.7 290.1 L185.2 287.2 L191.2 284.5 L197.5 282.2 L204.2 280.2 L211.1 278.5 L218.2 277.2 L225.6 276.3 L233.0 275.7 L240.5 275.5 L248.0 275.7 L255.4 276.3 L262.8 277.2 L269.9 278.5 L276.8 280.2 L283.5 282.2 L289.8 284.5 L295.8 287.2 L301.3 290.1 L306.4 293.3 L310.9 296.8 L315.0 300.4 L318.4 304.3 L321.3 308.3 L323.6 312.5 L325.2 316.7 L326.2 321.1Z"/><path d="M176.2 306.2 L176.1 307.7 L175.9 309.3 L175.5 310.8 L174.9 312.2 L174.2 313.6 L173.3 315.0 L172.3 316.3 L171.2 317.5 L169.9 318.6 L168.5 319.7 L167.0 320.6 L165.5 321.4 L163.8 322.2 L162.1 322.7 L160.3 323.2 L158.4 323.5 L156.6 323.7 L154.7 323.8 L152.8 323.7 L151.0 323.5 L149.1 323.2 L147.3 322.7 L145.6 322.2 L144.0 321.4 L142.4 320.6 L140.9 319.7 L139.5 318.6 L138.2 317.5 L137.1 316.3 L136.1 315.0 L135.2 313.6 L134.5 312.2 L133.9 310.8 L133.5 309.3 L133.3 307.7 L133.2 306.2 L133.3 304.7 L133.5 303.1 L133.9 301.6 L134.5 300.2 L135.2 298.8 L136.1 297.4 L137.1 296.1 L138.2 294.9 L139.5 293.8 L140.9 292.7 L142.4 291.8 L144.0 291.0 L145.6 290.2 L147.3 289.7 L149.1 289.2 L151.0 288.9 L152.8 288.7 L154.7 288.6 L156.6 288.7 L158.4 288.9 L160.3 289.2 L162.1 289.7 L163.8 290.2 L165.5 291.0 L167.0 291.8 L168.5 292.7 L169.9 293.8 L171.2 294.9 L172.3 296.1 L173.3 297.4 L174.2 298.8 L174.9 300.2 L175.5 301.6 L175.9 303.1 L176.1 304.7Z"/><path d="M347.5 307.0 L347.4 308.5 L347.2 310.1 L346.8 311.6 L346.2 313.0 L345.5 314.4 L344.6 315.8 L343.6 317.1 L342.5 318.3 L341.2 319.4 L339.8 320.5 L338.3 321.4 L336.8 322.2 L335.1 323.0 L333.4 323.5 L331.6 324.0 L329.7 324.3 L327.9 324.5 L326.0 324.6 L324.1 324.5 L322.3 324.3 L320.4 324.0 L318.6 323.5 L316.9 323.0 L315.2 322.2 L313.7 321.4 L312.2 320.5 L310.8 319.4 L309.5 318.3 L308.4 317.1 L307.4 315.8 L306.5 314.4 L305.8 313.0 L305.2 311.6 L304.8 310.1 L304.6 308.5 L304.5 307.0 L304.6 305.5 L304.8 303.9 L305.2 302.4 L305.8 301.0 L306.5 299.6 L307.4 298.2 L308.4 296.9 L309.5 295.7 L310.8 294.6 L312.2 293.5 L313.7 292.6 L315.2 291.8 L316.9 291.0 L318.6 290.5 L320.4 290.0 L322.3 289.7 L324.1 289.5 L326.0 289.4 L327.9 289.5 L329.7 289.7 L331.6 290.0 L333.4 290.5 L335.1 291.0 L336.8 291.8 L338.3 292.6 L339.8 293.5 L341.2 294.6 L342.5 295.7 L343.6 296.9 L344.6 298.2 L345.5 299.6 L346.2 301.0 L346.8 302.4 L347.2 303.9 L347.4 305.5Z"/><path d="M145.5 146.7 L148.5 266.0 L154.5 325.4"/><path d="M322.5 146.7 L324.3 266.0 L326.5 325.4"/><path d="M267.5 48.3 L267.5 49.5 L267.2 50.7 L266.7 51.8 L266.0 53.0 L265.1 54.1 L264.1 55.2 L262.9 56.2 L261.5 57.1 L260.0 58.0 L258.3 58.8 L256.5 59.5 L254.6 60.2 L252.6 60.7 L250.5 61.2 L248.4 61.5 L246.2 61.8 L244.0 61.9 L241.7 62.0 L239.4 61.9 L237.2 61.8 L235.0 61.5 L232.9 61.2 L230.8 60.7 L228.8 60.2 L226.9 59.5 L225.1 58.8 L223.4 58.0 L221.9 57.1 L220.5 56.2 L219.3 55.2 L218.3 54.1 L217.4 53.0 L216.7 51.8 L216.2 50.7 L215.9 49.5 L215.9 48.3 L215.9 47.1 L216.2 45.9 L216.7 44.8 L217.4 43.6 L218.3 42.5 L219.3 41.5 L220.5 40.4 L221.9 39.5 L223.4 38.6 L225.1 37.8 L226.9 37.1 L228.8 36.4 L230.8 35.9 L232.9 35.4 L235.0 35.1 L237.2 34.8 L239.4 34.7 L241.7 34.6 L244.0 34.7 L246.2 34.8 L248.4 35.1 L250.5 35.4 L252.6 35.9 L254.6 36.4 L256.5 37.1 L258.3 37.8 L260.0 38.6 L261.5 39.5 L262.9 40.4 L264.1 41.5 L265.1 42.5 L266.0 43.6 L266.7 44.8 L267.2 45.9 L267.5 47.1Z"/><path d="M268.8 84.2 L268.7 85.4 L268.4 86.6 L267.9 87.8 L267.2 89.0 L266.3 90.1 L265.3 91.1 L264.1 92.2 L262.7 93.1 L261.2 94.0 L259.6 94.8 L257.8 95.6 L255.9 96.2 L253.9 96.8 L251.8 97.3 L249.7 97.6 L247.5 97.9 L245.2 98.0 L243.0 98.1 L240.8 98.0 L238.5 97.9 L236.3 97.6 L234.2 97.3 L232.1 96.8 L230.1 96.2 L228.2 95.6 L226.4 94.8 L224.8 94.0 L223.3 93.1 L221.9 92.2 L220.7 91.1 L219.7 90.1 L218.8 89.0 L218.1 87.8 L217.6 86.6 L217.3 85.4 L217.2 84.2 L217.3 83.0 L217.6 81.8 L218.1 80.6 L218.8 79.4 L219.7 78.3 L220.7 77.2 L221.9 76.2 L223.3 75.3 L224.8 74.4 L226.4 73.6 L228.2 72.8 L230.1 72.2 L232.1 71.6 L234.2 71.1 L236.3 70.8 L238.5 70.5 L240.8 70.4 L243.0 70.3 L245.2 70.4 L247.5 70.5 L249.7 70.8 L251.8 71.1 L253.9 71.6 L255.9 72.2 L257.8 72.8 L259.6 73.6 L261.2 74.4 L262.7 75.3 L264.1 76.2 L265.3 77.2 L266.3 78.3 L267.2 79.4 L267.9 80.6 L268.4 81.8 L268.7 83.0Z"/><path d="M215.8 48.0 L217.2 84.0"/><path d="M267.5 48.0 L268.7 84.0"/><path d="M258.3 397.0 L258.2 398.4 L257.9 399.8 L257.4 401.1 L256.7 402.5 L255.8 403.8 L254.7 405.0 L253.4 406.2 L252.0 407.3 L250.4 408.3 L248.7 409.3 L246.8 410.1 L244.8 410.9 L242.7 411.5 L240.5 412.0 L238.3 412.5 L236.0 412.8 L233.7 412.9 L231.3 413.0 L228.9 412.9 L226.6 412.8 L224.3 412.5 L222.1 412.0 L219.9 411.5 L217.8 410.9 L215.8 410.1 L213.9 409.3 L212.2 408.3 L210.6 407.3 L209.2 406.2 L207.9 405.0 L206.8 403.8 L205.9 402.5 L205.2 401.1 L204.7 399.8 L204.4 398.4 L204.3 397.0 L204.4 395.6 L204.7 394.2 L205.2 392.9 L205.9 391.5 L206.8 390.2 L207.9 389.0 L209.2 387.8 L210.6 386.7 L212.2 385.7 L213.9 384.7 L215.8 383.9 L217.8 383.1 L219.9 382.5 L222.1 382.0 L224.3 381.5 L226.6 381.2 L228.9 381.1 L231.3 381.0 L233.7 381.1 L236.0 381.2 L238.3 381.5 L240.5 382.0 L242.7 382.5 L244.8 383.1 L246.8 383.9 L248.7 384.7 L250.4 385.7 L252.0 386.7 L253.4 387.8 L254.7 389.0 L255.8 390.2 L256.7 391.5 L257.4 392.9 L257.9 394.2 L258.2 395.6Z"/><path d="M259.5 431.6 L259.4 433.1 L259.1 434.5 L258.6 436.0 L257.9 437.4 L257.0 438.7 L255.9 440.1 L254.7 441.3 L253.3 442.5 L251.7 443.6 L250.0 444.5 L248.2 445.4 L246.2 446.2 L244.1 446.9 L242.0 447.5 L239.8 447.9 L237.5 448.2 L235.2 448.4 L232.9 448.5 L230.6 448.4 L228.3 448.2 L226.0 447.9 L223.8 447.5 L221.7 446.9 L219.6 446.2 L217.6 445.4 L215.8 444.5 L214.1 443.6 L212.5 442.5 L211.1 441.3 L209.9 440.1 L208.8 438.7 L207.9 437.4 L207.2 436.0 L206.7 434.5 L206.4 433.1 L206.3 431.6 L206.4 430.1 L206.7 428.7 L207.2 427.2 L207.9 425.8 L208.8 424.5 L209.9 423.1 L211.1 421.9 L212.5 420.7 L214.1 419.6 L215.8 418.7 L217.6 417.8 L219.6 417.0 L221.7 416.3 L223.8 415.7 L226.0 415.3 L228.3 415.0 L230.6 414.8 L232.9 414.7 L235.2 414.8 L237.5 415.0 L239.8 415.3 L242.0 415.7 L244.1 416.3 L246.2 417.0 L248.2 417.8 L250.0 418.7 L251.7 419.6 L253.3 420.7 L254.7 421.9 L255.9 423.1 L257.0 424.5 L257.9 425.8 L258.6 427.2 L259.1 428.7 L259.4 430.1Z"/><path d="M204.3 397.0 L206.3 431.6"/><path d="M258.3 397.0 L259.5 431.6"/><path d="M244.7 26.0 L240.0 61.0 L238.8 98.0 L240.0 137.5 L244.0 215.0 L245.4 276.7 L232.0 277.0"/><path d="M244.7 26.0 L247.0 98.0 L253.4 222.0 L252.4 231.0"/><path d="M238.8 98.0 L241.6 116.0 L240.0 137.5"/><path d="M238.0 98.0 L248.0 98.0"/><path d="M238.0 128.1 L248.0 128.1"/><path d="M224.8 202.0 L244.7 202.0"/><path d="M250.5 198.0 L252.4 231.0"/><path d="M229.0 191.3 L229.0 251.0"/><path d="M219.6 238.0 L227.1 381.0 L229.5 456.0"/><path d="M227.1 194.0 L227.1 231.0 L235.3 341.0 L234.2 381.0 L229.5 416.0 L229.5 458.0"/><path d="M244.9 56.0 L245.4 74.0M245.3 56.0 L245.8 74.0"/><path d="M234.4 338.7 L235.5 378.5M234.9 338.7 L236.0 378.5"/></g></svg><span class="t" style="top:11.89px;font-size:8.4px;line-height:12px;color:rgba(255,255,255,.72);font-family:'DejaVu Sans',sans-serif;left:369.50px;transform:scaleX(1.387);transform-origin:0 0;">COMSOL</span><span class="t" style="top:21.49px;font-size:8.4px;line-height:12px;color:rgba(255,255,255,.72);font-family:'DejaVu Sans',sans-serif;left:335.00px;transform:scaleX(1.416);transform-origin:0 0;">MULTIPHYSICS</span><svg style="left:425px;top:12.5px;" width="23" height="21" viewBox="0 0 23 21"><path d="M2 5.500L14 1.500l7.500 3-1.500 12-11 3.500-6.500-4z" fill="rgba(255,255,255,.45)" stroke="rgba(255,255,255,.8)" stroke-width=".8"/><path d="M2 5.500l7.500 3 12-4M9.500 8.500L9 20" stroke="rgba(255,255,255,.8)" stroke-width=".8" fill="none"/><circle cx="15" cy="11" r="3.500" fill="rgba(60,120,190,.65)"/></svg><span class="t" style="top:475.12px;font-size:9.2px;line-height:13px;color:#111;font-family:'DejaVu Sans',sans-serif;left:48.07px;">2</span><span class="t" style="top:475.12px;font-size:9.2px;line-height:13px;color:#111;font-family:'DejaVu Sans',sans-serif;left:137.07px;">1</span><span class="t" style="top:475.12px;font-size:9.2px;line-height:13px;color:#111;font-family:'DejaVu Sans',sans-serif;left:226.07px;">0</span><span class="t" style="top:475.12px;font-size:9.2px;line-height:13px;color:#111;font-family:'DejaVu Sans',sans-serif;left:314.41px;">-1</span><span class="t" style="top:475.12px;font-size:9.2px;line-height:13px;color:#111;font-family:'DejaVu Sans',sans-serif;left:403.41px;">-2</span><span class="t" style="top:251.02px;font-size:9.2px;line-height:13px;color:#111;font-family:'DejaVu Sans',sans-serif;left:442.07px;">2</span><span class="t" style="top:299.02px;font-size:9.2px;line-height:13px;color:#111;font-family:'DejaVu Sans',sans-serif;left:441.67px;">1</span><span class="t" style="top:349.12px;font-size:9.2px;line-height:13px;color:#111;font-family:'DejaVu Sans',sans-serif;left:441.07px;">0</span><span class="t" style="top:400.92px;font-size:9.2px;line-height:13px;color:#111;font-family:'DejaVu Sans',sans-serif;left:438.41px;">-1</span><span class="t" style="top:456.02px;font-size:9.2px;line-height:13px;color:#111;font-family:'DejaVu Sans',sans-serif;left:437.41px;">-2</span><span class="t" style="top:315.72px;font-size:9.2px;line-height:13px;color:#111;font-family:'DejaVu Sans',sans-serif;left:0.07px;">2</span><span class="t" style="top:388.82px;font-size:9.2px;line-height:13px;color:#111;font-family:'DejaVu Sans',sans-serif;left:7.07px;">1</span><span class="t" style="top:460.12px;font-size:9.2px;line-height:13px;color:#111;font-family:'DejaVu Sans',sans-serif;left:14.07px;">0</span><svg style="left:0px;top:431px;" width="50" height="40" viewBox="0 0 50 40"><path d="M38.500 25.400V6" stroke="#1010ff" stroke-width="2"/><path d="M38.500 2l-3 6h6z" fill="#1010ff"/><path d="M38.500 25.400H14" stroke="#10e010" stroke-width="2"/><path d="M9.500 25.400l6-3v6z" fill="#10e010"/><path d="M39 25v-8l1.500-5 1.500 5-1 3z" fill="#ff1010"/></svg><span class="t" style="top:419.37px;font-size:10.5px;line-height:15px;color:#111;font-family:'DejaVu Sans',sans-serif;left:34.50px;">z</span><span class="t" style="top:428.37px;font-size:10.5px;line-height:15px;color:#111;font-family:'DejaVu Sans',sans-serif;left:40.00px;">x</span><span class="t" style="top:445.87px;font-size:10.5px;line-height:15px;color:#111;font-family:'DejaVu Sans',sans-serif;left:1.00px;">y</span></div>
<!-- sec_msgs -->
<div class="pn" style="left:797px;top:687px;width:467px;height:227px;"></div><div style="left:798px;top:716px;width:465px;height:1px;background:#cfcfcf;"></div><div style="left:802px;top:694.5px;width:84px;height:21.5px;background:#ebebeb;"></div><span class="t" style="top:696.80px;font-size:13px;line-height:18px;color:#111;font-family:'DejaVu Sans',sans-serif;letter-spacing:-0.644px;left:808.00px;">Messages</span><svg style="left:871px;top:700px;" width="10" height="10" viewBox="0 0 10 10"><path d="M1 1l8 8M9 1l-8 8" stroke="#8a8a8a" stroke-width="1.400"/></svg><div style="left:890.3px;top:694.5px;width:61.3px;height:21.5px;background:#ebebeb;"></div><span class="t" style="top:696.80px;font-size:13px;line-height:18px;color:#111;font-family:'DejaVu Sans',sans-serif;letter-spacing:-0.560px;left:896.30px;">Progress</span><div style="left:956.3px;top:694.5px;width:31.5px;height:21.5px;background:#ebebeb;"></div><span class="t" style="top:696.80px;font-size:13px;line-height:18px;color:#111;font-family:'DejaVu Sans',sans-serif;letter-spacing:-0.573px;left:962.00px;">Log</span><div style="left:992px;top:694px;width:70px;height:23px;background:#fafbfe;border:1px solid #cfcfcf;border-bottom:none;box-sizing:border-box;"></div><span class="t" style="top:697.30px;font-size:13px;line-height:18px;color:#2f5d9e;font-family:'DejaVu Sans',sans-serif;letter-spacing:-0.574px;left:999.50px;">Table 2</span><svg style="left:1045.5px;top:701px;" width="10" height="10" viewBox="0 0 10 10"><path d="M1 1l8 8M9 1l-8 8" stroke="#8a8a8a" stroke-width="1.400"/></svg><svg style="left:1214px;top:699px;" width="42" height="12" viewBox="0 0 42 12"><path d="M1 3h8l-4 4z" fill="#6c7078"/><path d="M17.500 0h3.500v5.500h-3.500z" fill="#777"/><path d="M16 5.800h6.500M19.200 6v5" stroke="#888" stroke-width="1.200"/><path d="M30.500 1l9 9M39.500 1l-9 9" stroke="#555" stroke-width="1.500"/></svg><svg style="left:807.6px;top:723.8px;overflow:visible;" width="16" height="16" viewBox="0 0 16 16"><rect x=".6" y=".6" width="14.800" height="14.800" rx="1.500" fill="#dfe9f6" stroke="#4a7ebb" stroke-width="1.200"/><g fill="#4a7ebb"><circle cx="4" cy="4" r=".9"/><circle cx="8" cy="4" r=".9"/><circle cx="4" cy="10.500" r="1.700"/><circle cx="8" cy="10.500" r="1.700"/><circle cx="12" cy="10.500" r="1.700"/><rect x="3.300" y="11" width="1.400" height="4"/><rect x="7.300" y="11" width="1.400" height="4"/><rect x="11.300" y="8" width="1.400" height="7"/></g><rect x="11" y="3" width="2" height="2" fill="#e0245e"/></svg><span class="t" style="top:723.75px;font-size:6.5px;line-height:9px;color:#3f63a8;font-family:'DejaVu Sans',sans-serif;font-weight:bold;letter-spacing:0.132px;left:832.50px;">8.85</span><span class="t" style="top:729.75px;font-size:6.5px;line-height:9px;color:#3f63a8;font-family:'DejaVu Sans',sans-serif;font-weight:bold;letter-spacing:0.096px;left:832.50px;">e-12</span><svg style="left:856.0px;top:723.8px;overflow:visible;" width="16" height="16" viewBox="0 0 16 16"><path d="M3 .5l5.500 9" stroke="#8a5a2b" stroke-width="1.300"/><path d="M7 8l5 6.500-3.500 1.500L6 9.500z" fill="#e9c48c" stroke="#b98545" stroke-width=".6"/></svg><svg style="left:879.8px;top:723.8px;overflow:visible;" width="16" height="16" viewBox="0 0 16 16"><path d="M2.500 2.500l11 11M13.500 2.500l-11 11" stroke="#4a7ebb" stroke-width="2.300"/></svg><svg style="left:904.2px;top:723.8px;overflow:visible;" width="16" height="16" viewBox="0 0 16 16"><path d="M1.500 .5v14h14" stroke="#666" stroke-width="1" fill="none"/><rect x="3.500" y="2.500" width="10.500" height="10" fill="#eaf5e6" stroke="#4fa03f" stroke-width="1.200"/><path d="M3.500 5.800h10.500M3.500 9.200h10.500M8.700 2.500v10" stroke="#4fa03f" stroke-width="1.100"/></svg><div style="left:929px;top:724px;width:15.5px;height:15.5px;background:#a54eba;"></div><svg style="left:952.0px;top:723.8px;overflow:visible;" width="16" height="16" viewBox="0 0 16 16"><rect x=".6" y=".6" width="9" height="11" fill="#fff" stroke="#777" stroke-width="1"/><path d="M2.500 3.500h5M2.500 5.500h5" stroke="#999" stroke-width=".8"/><rect x="5.600" y="4.600" width="9.500" height="11" fill="#fff" stroke="#4a7ebb" stroke-width="1.100"/><path d="M7.500 8h5.500M7.500 10.200h5.500M7.500 12.400h5.500" stroke="#4a7ebb" stroke-width=".9"/></svg><svg style="left:976.0px;top:723.8px;overflow:visible;" width="16" height="16" viewBox="0 0 16 16"><rect x=".6" y="2.600" width="12" height="11" fill="#fff" stroke="#777" stroke-width="1.200"/><path d="M.6 5.200h12" stroke="#777"/><path d="M5 9.500h8" stroke="#4a7ebb" stroke-width="1.800"/><path d="M16 9.500l-4-3.200v6.400z" fill="#4a7ebb"/></svg><svg style="left:999.65px;top:723.8px;overflow:visible;" width="15.5" height="16" viewBox="0 0 15.5 16"><rect x=".3" y=".3" width="14.800" height="15" fill="#fff" stroke="#4a7ebb" stroke-width=".6"/><rect x="1.0" y="1.0" width="4" height="3" fill="#4a7ebb"/><rect x="1.0" y="4.6" width="4" height="3" fill="#8fb0dc"/><rect x="1.0" y="8.2" width="4" height="3" fill="#8fb0dc"/><rect x="1.0" y="11.8" width="4" height="3" fill="#8fb0dc"/><rect x="5.7" y="1.0" width="4" height="3" fill="#4a7ebb"/><rect x="5.7" y="4.6" width="4" height="3" fill="#8fb0dc"/><rect x="5.7" y="8.2" width="4" height="3" fill="#8fb0dc"/><rect x="5.7" y="11.8" width="4" height="3" fill="#8fb0dc"/><rect x="10.4" y="1.0" width="4" height="3" fill="#4a7ebb"/><rect x="10.4" y="4.6" width="4" height="3" fill="#8fb0dc"/><rect x="10.4" y="8.2" width="4" height="3" fill="#8fb0dc"/><rect x="10.4" y="11.8" width="4" height="3" fill="#8fb0dc"/></svg><svg style="left:1024px;top:730px;" width="8" height="5" viewBox="0 0 8 5"><path d="M0 0h7l-3.500 4z" fill="#111"/></svg><div style="left:807.5px;top:748px;width:446.5px;height:157.5px;background:#fbfcfe;border:1px solid #a3a3a3;box-sizing:border-box;"></div>
<!-- sec_bottom -->
<div style="left:0px;top:918px;width:1268px;height:31px;background:#f0edec;"></div><span class="t" style="top:925.64px;font-size:12px;line-height:17px;color:#111;letter-spacing:-0.638px;left:881.50px;">3.87 GB | 4.44 GB</span><div style="left:1022px;top:933px;width:1px;height:1px;background:#999;"></div><div style="left:0px;top:948.5px;width:1268px;height:40px;background:linear-gradient(#4a4a4a 0,#1c1c1c 2px,#0d0d0d 45%,#070707 100%);"></div><div style="left:230px;top:950px;width:1024px;height:38px;background:linear-gradient(115deg,rgba(255,255,255,0) 0,rgba(255,255,255,.05) 30%,rgba(255,255,255,0) 31%,rgba(255,255,255,.04) 60%,rgba(255,255,255,0) 61%);"></div><svg style="left:-3px;top:950px;" width="40" height="39" viewBox="0 0 40 39"><defs><radialGradient id="orb" cx=".5" cy=".35" r=".7"><stop offset="0" stop-color="#6fb0e2"/><stop offset=".5" stop-color="#1f66b0"/><stop offset="1" stop-color="#0a3a7a"/></radialGradient><radialGradient id="orb2" cx=".5" cy="1" r=".6"><stop offset="0" stop-color="#35d0ff" stop-opacity=".9"/><stop offset="1" stop-color="#35d0ff" stop-opacity="0"/></radialGradient></defs><circle cx="19" cy="19.200" r="17.800" fill="url(#orb)" stroke="#7f9cc0" stroke-width="1"/><circle cx="19" cy="19" r="17" fill="url(#orb2)"/><path d="M10.800 9.300c3-1.700 6-1.400 9.200.5l-2.300 7.700c-3-1.800-6-2-9.200-.4z" fill="#f0571f"/><path d="M21 11.300c3 1.600 6 1.500 9.300-.4l-2.300 8c-3 1.800-6 2-9.200.2z" fill="#8cc43c"/><path d="M8 18.600c3-1.700 6-1.400 9.200.5l-2.300 7.700c-3-1.800-6-2-9.200-.4z" fill="#2e9fe6"/><path d="M18.300 20.600c3 1.600 6 1.500 9.300-.4l-2.300 8c-3 1.800-6 2-9.200.2z" fill="#fdbf14"/><path d="M3 14c8-9 24-9 32 0-6-4-26-4-32 0z" fill="#fff" opacity=".25"/></svg><svg style="left:61.5px;top:953.5px;" width="31" height="31" viewBox="0 0 31 31"><circle cx="15.500" cy="15.500" r="15" fill="#db4437"/><path d="M15.500 15.500L2.500 8A15 15 0 0 0 12 30.100z" fill="#0f9d58"/><path d="M15.500 15.500L12 30.100A15 15 0 0 0 29.500 10.200z" fill="#ffcd40"/><path d="M15.500 15.500L29.500 10.200A15 15 0 0 0 2.500 8z" fill="#db4437"/><circle cx="15.500" cy="15.500" r="7" fill="#f1f1f1"/><circle cx="15.500" cy="15.500" r="5.600" fill="#4285f4"/></svg><div style="left:110px;top:950px;width:58px;height:37.5px;background:linear-gradient(125deg,rgba(255,255,255,.22) 0,rgba(255,255,255,.1) 38%,rgba(255,255,255,0) 39%),linear-gradient(#b4b4b4 0,#8c8c8c 45%,#737373 55%,#858585 100%);border:1px solid #e2e2e2;border-radius:2px;box-sizing:border-box;"></div><svg style="left:120px;top:952px;" width="40" height="34" viewBox="0 0 40 34"><polygon points="3.3,9.2 21.0,1.6 30.0,3.0 12.4,10.8" fill="#e6f4fc"/><polygon points="3.3,9.2 12.4,10.8 17.5,32.1 6.8,26.5" fill="#a5d2f0"/><polygon points="12.4,10.8 30.0,3.0 35.3,21.4 17.5,32.1" fill="#cbe6f7"/><polyline points="3.3,9.2 12.4,10.8 30.0,3.0" fill="none" stroke="#f4fbff" stroke-width=".9"/><polyline points="12.4,10.8 17.5,32.1" fill="none" stroke="#f4fbff" stroke-width=".9"/><circle cx="23" cy="17.5" r="7.300" fill="#1d5cab"/><path d="M17.5 15c2-4 7-5 10-2-2 .5-3 2.500-5 2.500s-3-1.500-5-.5z" fill="#f2d83a"/><path d="M18 21c2-2 5-1 7-3s3-1.500 4.500-.5c-1 4-7.500 7-11.500 3.500z" fill="#35a7e4"/><path d="M20 13c2-1 3 0 4 1.500-2 .5-3 .5-4-1.500z" fill="#46b04a"/><circle cx="9.5" cy="18" r="2" fill="#f2d83a" opacity=".85"/></svg><div style="left:172px;top:950px;width:58px;height:37.5px;background:linear-gradient(118deg,rgba(255,255,255,.25) 0,rgba(255,255,255,.08) 45%,rgba(255,255,255,0) 46%),linear-gradient(#f5e680 0,#ecc648 38%,#dc8d28 62%,#c96a1b 100%);border:1px solid #fbeeb0;border-radius:2px;box-sizing:border-box;"></div><svg style="left:183px;top:959px;" width="34" height="20" viewBox="0 0 34 20"><polygon points="2.0,7.5 16.0,2.3 31.5,7.0 17.0,14.0" fill="#ececec" stroke="#fafafa" stroke-width=".6"/><polygon points="2.0,7.5 17.0,14.0 17.0,17.6 2.0,11.0" fill="#c4c4c4"/><polygon points="17.0,14.0 31.5,7.0 31.5,11.0 17.0,17.6" fill="#383838"/><polyline points="2.0,9.2 17.0,15.8" fill="none" stroke="#8a8a8a" stroke-width=".7"/></svg><span class="t" style="top:959.04px;font-size:12px;line-height:17px;color:#eee;letter-spacing:-1.167px;left:1002.80px;">PT</span><svg style="left:1023px;top:959.5px;" width="16" height="14" viewBox="0 0 16 14"><path d="M8 4c1-3 4-1.500 6-3.500" stroke="#bbb" stroke-width="1" fill="none"/><rect x=".5" y="4.500" width="15" height="9" rx="1.500" fill="#d8d8d8" stroke="#999" stroke-width=".8"/><path d="M2.500 7h11M2.500 9h11M4 11.200h8" stroke="#777" stroke-width="1" stroke-dasharray="1.300 .8"/></svg><svg style="left:1051px;top:967.5px;" width="9" height="5" viewBox="0 0 9 5"><path d="M0 5h8.600L4.300 0z" fill="#f0f0f0"/></svg><svg style="left:1072px;top:961.5px;" width="16" height="16" viewBox="0 0 16 16"><rect x="2.500" y="0" width="6" height="5" fill="#cfcfcf" stroke="#888" stroke-width=".6"/><path d="M1 5h9v5.500c0 2-1.500 3.500-3 3.500h-3c-1.500 0-3-1.500-3-3.500z" fill="#8d8d8d"/><path d="M5.500 14v2" stroke="#777" stroke-width="1.500"/><circle cx="11.600" cy="11.400" r="4.200" fill="#2fae3a" stroke="#8fdc95" stroke-width=".6"/><path d="M9.500 11.500l1.700 1.800 2.700-3.600" stroke="#fff" stroke-width="1.300" fill="none"/></svg><svg style="left:1102.5px;top:962.5px;" width="16" height="15" viewBox="0 0 16 15"><path d="M1.500 0v14" stroke="#ddd" stroke-width="1.400"/><path d="M2.500 1c3-1.500 5 1.500 9 0v6c-4 1.500-6-1.500-9 0z" fill="#f2f2f2"/><circle cx="11" cy="10.600" r="4.300" fill="#e03030" stroke="#ff9a9a" stroke-width=".6"/><path d="M9.200 8.800l3.600 3.600M12.800 8.800l-3.600 3.600" stroke="#fff" stroke-width="1.300"/></svg><svg style="left:1126.5px;top:962.5px;" width="15" height="15" viewBox="0 0 15 15"><rect x="4.500" y="2.500" width="9.500" height="8" fill="#111" stroke="#e8e8e8" stroke-width="1.300"/><path d="M9.200 10.500v3M5.500 13.800h7.500" stroke="#e8e8e8" stroke-width="1.300"/><path d="M1.500 0v6.500h3M0 1.500h3.500" stroke="#e8e8e8" stroke-width="1.200" fill="none"/><rect x=".5" y="1.500" width="2.600" height="3.500" fill="#e8e8e8"/></svg><svg style="left:1152px;top:963px;" width="13" height="14" viewBox="0 0 13 14"><path d="M0 4.500h3L7.500 .5v12.500L3 9H0z" fill="#f2f2f2"/><path d="M9.500 4c1.300 1.500 1.300 4 0 5.500" stroke="#ddd" stroke-width="1" fill="none"/></svg><span class="t" style="top:954.34px;font-size:12px;line-height:17px;color:#fff;letter-spacing:-0.766px;left:1199.70px;">13:31</span><span class="t" style="top:971.34px;font-size:12px;line-height:17px;color:#fff;letter-spacing:-0.226px;left:1183.70px;">04/07/2018</span><div style="left:1254px;top:949.5px;width:14px;height:39px;background:linear-gradient(135deg,#5a5a5a 0,#2a2a2a 40%,#111 41%,#1a1a1a 100%);border:1px solid #8a8a8a;box-sizing:border-box;"></div><svg style="left:405px;top:180px;" width="400" height="90" viewBox="0 0 400 90"><path d="M55.0 11.5H341C365.0 12.0 386.0 16.5 386.5 24.0V68C386.0 73.0 370.0 76.8 348.0 77.3H47C27.0 76.8 11.0 73.5 10.5 67.0V23.5C11.0 16.5 31.0 12.0 55.0 11.5Z" fill="none" stroke="#ec1c24" stroke-width="4.600" stroke-linejoin="round"/></svg></div></body></html>
